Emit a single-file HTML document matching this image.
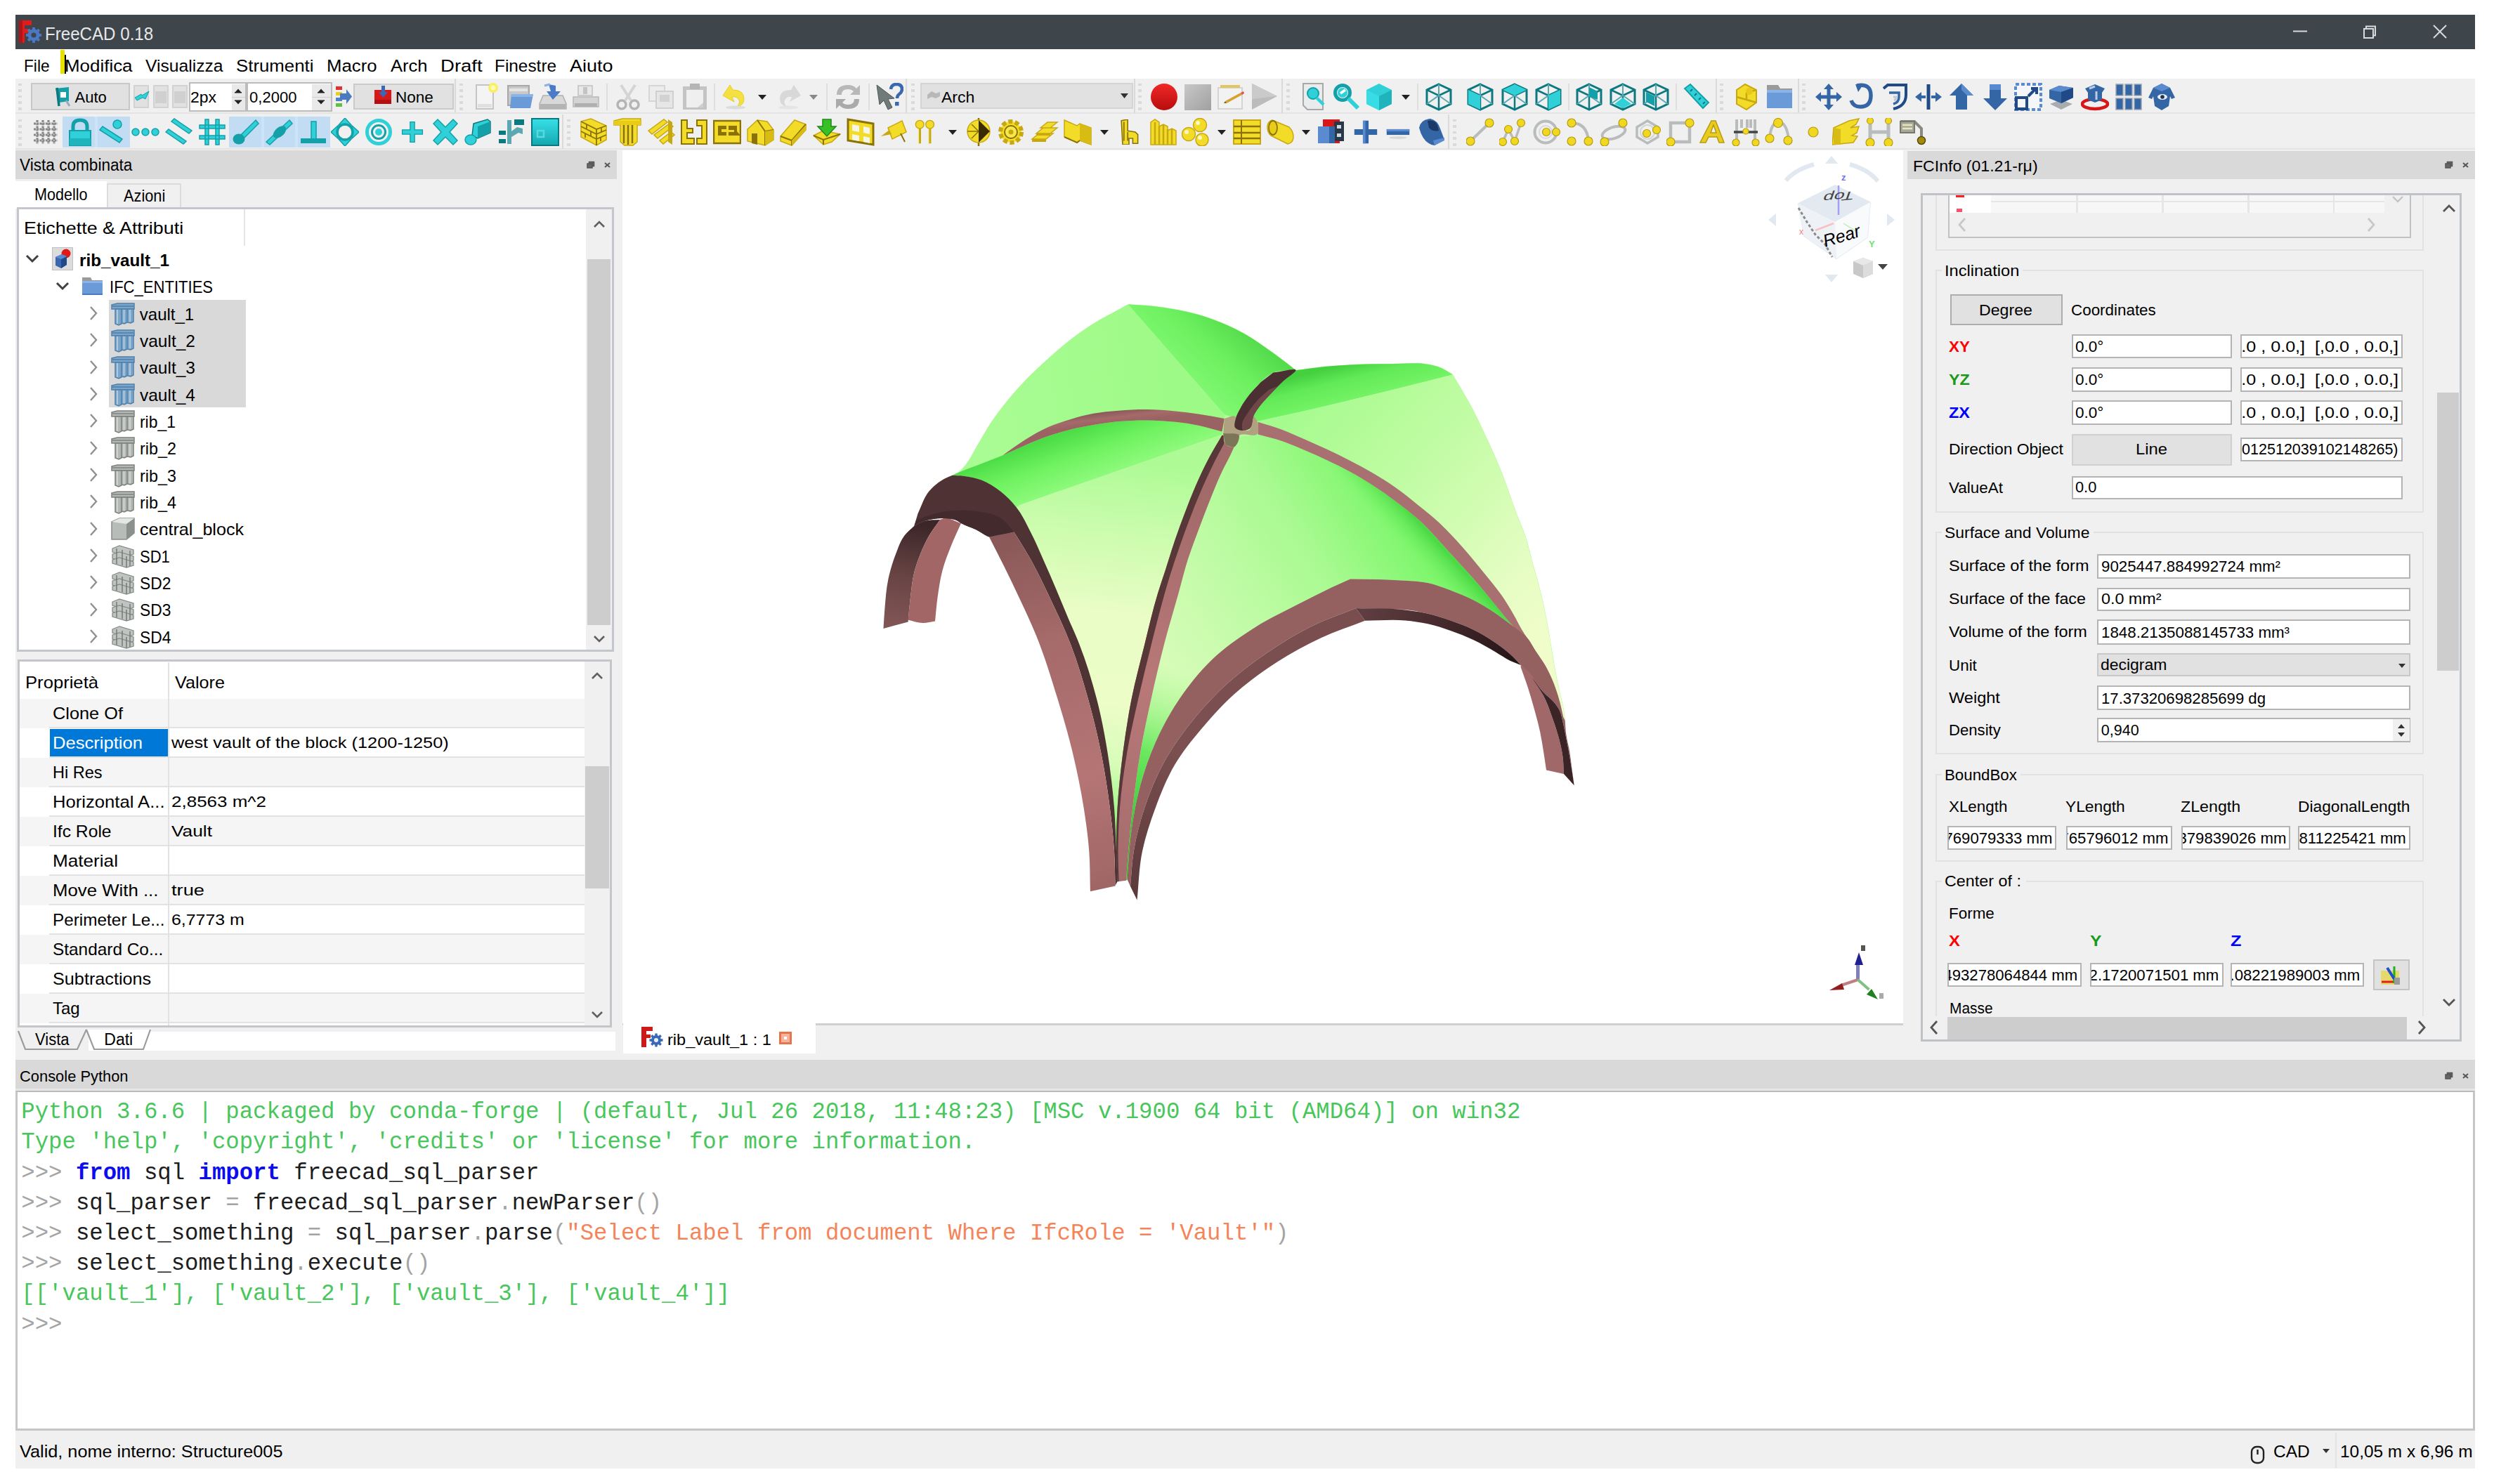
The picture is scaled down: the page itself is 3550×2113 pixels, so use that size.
<!DOCTYPE html>
<html><head><meta charset="utf-8"><title>FreeCAD 0.18</title>
<style>
html,body{margin:0;padding:0;background:#fff;}
body{width:3550px;height:2113px;position:relative;overflow:hidden;font-family:"Liberation Sans",sans-serif;}
.b{position:absolute;display:block;}
.t{position:absolute;white-space:pre;line-height:1;transform-origin:0 0;font-family:"Liberation Sans",sans-serif;}
</style></head><body>
<div class="b" style="left:22px;top:21px;width:3501px;height:49px;background:#3e454b;"></div>
<div class="b" style="left:22px;top:70px;width:3501px;height:42px;background:#ffffff;"></div>
<div class="b" style="left:22px;top:112px;width:3501px;height:101px;background:#f0f0f0;"></div>
<div class="b" style="left:22px;top:160px;width:3501px;height:2px;background:#e4e4e4;"></div>
<div class="b" style="left:22px;top:211px;width:3501px;height:2px;background:#e4e4e4;"></div>
<div class="b" style="left:22px;top:213px;width:3501px;height:1878px;background:#f0f0f0;"></div>
<span class="t" style="left:64.3px;top:35.8px;font-size:25px;color:#e6e8ea;transform:scaleX(0.965);">FreeCAD 0.18</span>
<svg class="b" style="left:24px;top:26px;" width="40" height="40" viewBox="0 0 40 40"><path d="M3 3h18v7h-10v5h7v6h-7v14h-8z" fill="#e01b1b"/><path d="M3 3h5v32h-5z" fill="#b01414"/><circle cx="24" cy="24" r="8.5" fill="#4a78c2"/><circle cx="24" cy="24" r="3.6" fill="#3e454b"/><g stroke="#4a78c2" stroke-width="4"><path d="M24 13v22M13 24h22M16.2 16.2l15.6 15.6M31.8 16.2l-15.6 15.6"/></g><circle cx="24" cy="24" r="3.6" fill="#3e454b"/></svg>
<svg class="b" style="left:3259px;top:40px;overflow:visible;" width="440" height="30" viewBox="0 0 440 30"><path d="M5 4.5h20" stroke="#d8dadc" stroke-width="2"/><path d="M106 1h13v13h-13zM109 1v-3.500h13v13h-3" fill="none" stroke="#d8dadc" stroke-width="2"/><path d="M205 -4l18 18M223 -4l-18 18" stroke="#d8dadc" stroke-width="2"/></svg>
<span class="t" style="left:33.9px;top:81.6px;font-size:24.5px;color:#000;transform:scaleX(0.926);">File</span>
<span class="t" style="left:92.2px;top:81.6px;font-size:24.5px;color:#000;transform:scaleX(1.058);">Modifica</span>
<span class="t" style="left:207.3px;top:81.6px;font-size:24.5px;color:#000;transform:scaleX(1.006);">Visualizza</span>
<span class="t" style="left:336.2px;top:81.6px;font-size:24.5px;color:#000;transform:scaleX(1.054);">Strumenti</span>
<span class="t" style="left:465.2px;top:81.6px;font-size:24.5px;color:#000;transform:scaleX(1.051);">Macro</span>
<span class="t" style="left:556.2px;top:81.6px;font-size:24.5px;color:#000;transform:scaleX(1.043);">Arch</span>
<span class="t" style="left:627.2px;top:81.6px;font-size:24.5px;color:#000;transform:scaleX(1.124);">Draft</span>
<span class="t" style="left:704.3px;top:81.6px;font-size:24.5px;color:#000;transform:scaleX(0.995);">Finestre</span>
<span class="t" style="left:811.2px;top:81.6px;font-size:24.5px;color:#000;transform:scaleX(1.103);">Aiuto</span>
<div class="b" style="left:86px;top:71px;width:6px;height:34px;background:#e8e000;"></div>
<div class="b" style="left:92px;top:78px;width:2px;height:27px;background:#000;"></div>
<div class="b" style="left:22px;top:214px;width:856px;height:41px;background:#d9d9d9;"></div>
<span class="t" style="left:27.9px;top:224.1px;font-size:23.5px;color:#000;transform:scaleX(0.962);">Vista combinata</span>
<svg class="b" style="left:833px;top:227px;" width="40" height="16" viewBox="0 0 40 16"><path d="M3 6h7v6h-7z M5.500 6v-2.500h7v6h-2.500" fill="#666" stroke="#555" stroke-width="1.500"/><path d="M28 5l7 6M35 5l-7 6" stroke="#555" stroke-width="2"/></svg>
<div class="b" style="left:22px;top:258px;width:130px;height:39px;background:#ffffff;"></div>
<div class="b" style="left:152px;top:261px;width:106px;height:35px;background:#f0f0f0;border:2px solid #dcdcdc;border-bottom:none;box-sizing:border-box;"></div>
<span class="t" style="left:49.1px;top:264.7px;font-size:24px;color:#000;transform:scaleX(0.899);">Modello</span>
<span class="t" style="left:176.3px;top:267.2px;font-size:24px;color:#000;transform:scaleX(0.907);">Azioni</span>
<div class="b" style="left:24px;top:295px;width:850px;height:633px;background:#ffffff;border:3px solid #c3c7cb;box-sizing:border-box;"></div>
<div class="b" style="left:346.5px;top:298px;width:2px;height:52px;background:#e5e5e5;"></div>
<span class="t" style="left:34.2px;top:313.3px;font-size:24px;color:#000;transform:scaleX(1.120);">Etichette &amp; Attributi</span>
<div class="b" style="left:154.6px;top:427px;width:195.2px;height:153px;background:#d9d9d9;"></div>
<div class="b" style="left:834px;top:298px;width:37px;height:627px;background:#f0f0f0;"></div>
<div class="b" style="left:836px;top:369px;width:33px;height:521px;background:#cdcdcd;"></div>
<svg class="b" style="left:843px;top:312px;" width="20" height="14" viewBox="0 0 20 14"><path d="M3 11l7-7 7 7" fill="none" stroke="#606060" stroke-width="2.6"/></svg>
<svg class="b" style="left:843px;top:903px;" width="20" height="14" viewBox="0 0 20 14"><path d="M3 3l7 7 7-7" fill="none" stroke="#606060" stroke-width="2.6"/></svg>
<svg class="b" style="left:36px;top:361px;" width="20" height="14" viewBox="0 0 20 14"><path d="M2 3l8 8 8-8" fill="none" stroke="#404040" stroke-width="3"/></svg>
<svg class="b" style="left:79px;top:400px;" width="20" height="14" viewBox="0 0 20 14"><path d="M2 3l8 8 8-8" fill="none" stroke="#404040" stroke-width="3"/></svg>
<span class="t" style="left:112.7px;top:359.0px;font-size:24px;color:#000;font-weight:bold;transform:scaleX(1.010);">rib_vault_1</span>
<span class="t" style="left:155.9px;top:397.3px;font-size:24px;color:#000;transform:scaleX(0.919);">IFC_ENTITIES</span>
<svg class="b" style="left:126px;top:434.98px;" width="14" height="22" viewBox="0 0 14 22"><path d="M3 2l8 9-8 9" fill="none" stroke="#909090" stroke-width="2.4"/></svg>
<span class="t" style="left:198.8px;top:435.7px;font-size:24px;color:#000;">vault_1</span>
<svg class="b" style="left:126px;top:473.32px;" width="14" height="22" viewBox="0 0 14 22"><path d="M3 2l8 9-8 9" fill="none" stroke="#909090" stroke-width="2.4"/></svg>
<span class="t" style="left:198.8px;top:474.0px;font-size:24px;color:#000;transform:scaleX(1.020);">vault_2</span>
<svg class="b" style="left:126px;top:511.66px;" width="14" height="22" viewBox="0 0 14 22"><path d="M3 2l8 9-8 9" fill="none" stroke="#909090" stroke-width="2.4"/></svg>
<span class="t" style="left:198.8px;top:512.3px;font-size:24px;color:#000;transform:scaleX(1.020);">vault_3</span>
<svg class="b" style="left:126px;top:550px;" width="14" height="22" viewBox="0 0 14 22"><path d="M3 2l8 9-8 9" fill="none" stroke="#909090" stroke-width="2.4"/></svg>
<span class="t" style="left:198.8px;top:550.7px;font-size:24px;color:#000;transform:scaleX(1.020);">vault_4</span>
<svg class="b" style="left:126px;top:588.34px;" width="14" height="22" viewBox="0 0 14 22"><path d="M3 2l8 9-8 9" fill="none" stroke="#909090" stroke-width="2.4"/></svg>
<span class="t" style="left:198.8px;top:589.0px;font-size:24px;color:#000;transform:scaleX(0.953);">rib_1</span>
<svg class="b" style="left:126px;top:626.68px;" width="14" height="22" viewBox="0 0 14 22"><path d="M3 2l8 9-8 9" fill="none" stroke="#909090" stroke-width="2.4"/></svg>
<span class="t" style="left:198.8px;top:627.4px;font-size:24px;color:#000;transform:scaleX(0.972);">rib_2</span>
<svg class="b" style="left:126px;top:665.02px;" width="14" height="22" viewBox="0 0 14 22"><path d="M3 2l8 9-8 9" fill="none" stroke="#909090" stroke-width="2.4"/></svg>
<span class="t" style="left:198.8px;top:665.7px;font-size:24px;color:#000;transform:scaleX(0.972);">rib_3</span>
<svg class="b" style="left:126px;top:703.36px;" width="14" height="22" viewBox="0 0 14 22"><path d="M3 2l8 9-8 9" fill="none" stroke="#909090" stroke-width="2.4"/></svg>
<span class="t" style="left:198.8px;top:704.0px;font-size:24px;color:#000;transform:scaleX(0.972);">rib_4</span>
<svg class="b" style="left:126px;top:741.7px;" width="14" height="22" viewBox="0 0 14 22"><path d="M3 2l8 9-8 9" fill="none" stroke="#909090" stroke-width="2.4"/></svg>
<span class="t" style="left:198.7px;top:742.4px;font-size:24px;color:#000;transform:scaleX(1.047);">central_block</span>
<svg class="b" style="left:126px;top:780.04px;" width="14" height="22" viewBox="0 0 14 22"><path d="M3 2l8 9-8 9" fill="none" stroke="#909090" stroke-width="2.4"/></svg>
<span class="t" style="left:198.8px;top:780.7px;font-size:24px;color:#000;transform:scaleX(0.917);">SD1</span>
<svg class="b" style="left:126px;top:818.38px;" width="14" height="22" viewBox="0 0 14 22"><path d="M3 2l8 9-8 9" fill="none" stroke="#909090" stroke-width="2.4"/></svg>
<span class="t" style="left:198.8px;top:819.1px;font-size:24px;color:#000;transform:scaleX(0.950);">SD2</span>
<svg class="b" style="left:126px;top:856.72px;" width="14" height="22" viewBox="0 0 14 22"><path d="M3 2l8 9-8 9" fill="none" stroke="#909090" stroke-width="2.4"/></svg>
<span class="t" style="left:198.8px;top:857.4px;font-size:24px;color:#000;transform:scaleX(0.950);">SD3</span>
<svg class="b" style="left:126px;top:895.06px;" width="14" height="22" viewBox="0 0 14 22"><path d="M3 2l8 9-8 9" fill="none" stroke="#909090" stroke-width="2.4"/></svg>
<span class="t" style="left:198.8px;top:895.7px;font-size:24px;color:#000;transform:scaleX(0.950);">SD4</span>
<div class="b" style="left:25px;top:939px;width:846px;height:524px;background:#ffffff;border:3px solid #c3c7cb;box-sizing:border-box;"></div>
<span class="t" style="left:36.2px;top:959.7px;font-size:24px;color:#000;transform:scaleX(1.068);">Proprietà</span>
<span class="t" style="left:249.2px;top:959.7px;font-size:24px;color:#000;transform:scaleX(1.049);">Valore</span>
<div class="b" style="left:28px;top:994.5px;width:804px;height:42px;background:#f5f5f5;"></div>
<div class="b" style="left:70px;top:1035px;width:762px;height:2px;background:#e2e2e2;"></div>
<span class="t" style="left:74.8px;top:1003.7px;font-size:24px;color:#000;transform:scaleX(1.055);">Clone Of</span>
<div class="b" style="left:70px;top:1077px;width:762px;height:2px;background:#e2e2e2;"></div>
<div class="b" style="left:70.8px;top:1037.5px;width:169.2px;height:39px;background:#0078d7;"></div>
<span class="t" style="left:74.8px;top:1045.7px;font-size:24px;color:#fff;transform:scaleX(1.066);">Description</span>
<span class="t" style="left:243.8px;top:1047.0px;font-size:22.5px;color:#000;transform:scaleX(1.127);">west vault of the block (1200-1250)</span>
<div class="b" style="left:28px;top:1078.5px;width:804px;height:42px;background:#f5f5f5;"></div>
<div class="b" style="left:70px;top:1119px;width:762px;height:2px;background:#e2e2e2;"></div>
<span class="t" style="left:74.9px;top:1087.7px;font-size:24px;color:#000;transform:scaleX(0.981);">Hi Res</span>
<div class="b" style="left:70px;top:1161px;width:762px;height:2px;background:#e2e2e2;"></div>
<span class="t" style="left:74.8px;top:1129.7px;font-size:24px;color:#000;transform:scaleX(1.068);">Horizontal A...</span>
<span class="t" style="left:243.8px;top:1131.0px;font-size:22.5px;color:#000;transform:scaleX(1.155);">2,8563 m^2</span>
<div class="b" style="left:28px;top:1162.5px;width:804px;height:42px;background:#f5f5f5;"></div>
<div class="b" style="left:70px;top:1203px;width:762px;height:2px;background:#e2e2e2;"></div>
<span class="t" style="left:74.9px;top:1171.7px;font-size:24px;color:#000;transform:scaleX(1.027);">Ifc Role</span>
<span class="t" style="left:243.8px;top:1173.0px;font-size:22.5px;color:#000;transform:scaleX(1.169);">Vault</span>
<div class="b" style="left:70px;top:1245px;width:762px;height:2px;background:#e2e2e2;"></div>
<span class="t" style="left:74.8px;top:1213.7px;font-size:24px;color:#000;transform:scaleX(1.089);">Material</span>
<div class="b" style="left:28px;top:1246.5px;width:804px;height:42px;background:#f5f5f5;"></div>
<div class="b" style="left:70px;top:1287px;width:762px;height:2px;background:#e2e2e2;"></div>
<span class="t" style="left:74.8px;top:1255.7px;font-size:24px;color:#000;transform:scaleX(1.074);">Move With ...</span>
<span class="t" style="left:243.8px;top:1257.0px;font-size:22.5px;color:#000;transform:scaleX(1.213);">true</span>
<div class="b" style="left:70px;top:1329px;width:762px;height:2px;background:#e2e2e2;"></div>
<span class="t" style="left:74.9px;top:1297.7px;font-size:24px;color:#000;transform:scaleX(1.014);">Perimeter Le...</span>
<span class="t" style="left:243.9px;top:1299.0px;font-size:22.5px;color:#000;transform:scaleX(1.107);">6,7773 m</span>
<div class="b" style="left:28px;top:1330.5px;width:804px;height:42px;background:#f5f5f5;"></div>
<div class="b" style="left:70px;top:1371px;width:762px;height:2px;background:#e2e2e2;"></div>
<span class="t" style="left:74.9px;top:1339.7px;font-size:24px;color:#000;transform:scaleX(1.016);">Standard Co...</span>
<div class="b" style="left:70px;top:1413px;width:762px;height:2px;background:#e2e2e2;"></div>
<span class="t" style="left:74.8px;top:1381.7px;font-size:24px;color:#000;transform:scaleX(1.051);">Subtractions</span>
<div class="b" style="left:28px;top:1414.5px;width:804px;height:42px;background:#f5f5f5;"></div>
<div class="b" style="left:70px;top:1455px;width:762px;height:2px;background:#e2e2e2;"></div>
<span class="t" style="left:74.9px;top:1423.7px;font-size:24px;color:#000;">Tag</span>
<div class="b" style="left:239px;top:943px;width:2px;height:517px;background:#e2e2e2;"></div>
<div class="b" style="left:832px;top:942px;width:36px;height:518px;background:#f0f0f0;"></div>
<div class="b" style="left:833px;top:1091px;width:34px;height:174px;background:#cdcdcd;"></div>
<svg class="b" style="left:840px;top:955px;" width="20" height="14" viewBox="0 0 20 14"><path d="M3 11l7-7 7 7" fill="none" stroke="#606060" stroke-width="2.6"/></svg>
<svg class="b" style="left:840px;top:1438px;" width="20" height="14" viewBox="0 0 20 14"><path d="M3 3l7 7 7-7" fill="none" stroke="#606060" stroke-width="2.6"/></svg>
<div class="b" style="left:126px;top:1468.6px;width:750px;height:27.8px;background:#ffffff;"></div>
<svg class="b" style="left:22px;top:1464px;" width="200" height="36" viewBox="0 0 200 36"><path d="M101 2l11 28h70l10-28z" fill="#fff"/><path d="M4 4l10 26h74l13-28" fill="none" stroke="#9c9c9c" stroke-width="2.200"/><path d="M101 2l11 28h70l10-28" fill="none" stroke="#9c9c9c" stroke-width="2.200"/></svg>
<span class="t" style="left:49.8px;top:1469.3px;font-size:23px;color:#000;transform:scaleX(0.957);">Vista</span>
<span class="t" style="left:148.3px;top:1469.3px;font-size:23px;color:#000;">Dati</span>
<div class="b" style="left:886px;top:214px;width:1823px;height:1243px;background:#ffffff;"></div>
<div class="b" style="left:886px;top:1457px;width:1823px;height:3px;background:#cfcfcf;"></div>
<div class="b" style="left:887px;top:1457px;width:274px;height:43px;background:#ffffff;"></div>
<span class="t" style="left:950.3px;top:1469.5px;font-size:22.5px;color:#000;transform:scaleX(1.046);">rib_vault_1 : 1</span>
<svg class="b" style="left:911px;top:1461px;" width="36" height="32" viewBox="0 0 36 32"><path d="M2 1h16v6h-9v5h6v5h-6v13h-7z" fill="#d01818"/><circle cx="23" cy="20" r="7" fill="#3a68b4"/><g stroke="#3a68b4" stroke-width="3.4"><path d="M23 10.500v19M13.500 20h19M16.300 13.300l13.400 13.400M29.700 13.300l-13.400 13.400"/></g><circle cx="23" cy="20" r="3" fill="#e8ecf4"/></svg>
<svg class="b" style="left:1109px;top:1469px;" width="20" height="20" viewBox="0 0 20 20"><rect x="1.500" y="1.500" width="15" height="15" fill="#f4b49c" stroke="#e8744c" stroke-width="3"/><rect x="7" y="7" width="4" height="4" fill="#fff"/></svg>
<div class="b" style="left:22px;top:1508.6px;width:3501px;height:41.4px;background:#d9d9d9;"></div>
<div class="b" style="left:22px;top:1550px;width:3501px;height:3px;background:#e6e6e6;"></div>
<span class="t" style="left:27.9px;top:1521.6px;font-size:22px;color:#000;transform:scaleX(0.995);">Console Python</span>
<svg class="b" style="left:3478px;top:1524px;" width="40" height="16" viewBox="0 0 40 16"><path d="M3 6h7v6h-7z M5.500 6v-2.500h7v6h-2.500" fill="#666" stroke="#555" stroke-width="1.500"/><path d="M28 5l7 6M35 5l-7 6" stroke="#555" stroke-width="2"/></svg>
<div class="b" style="left:22px;top:1553px;width:3501px;height:483.5px;background:#ffffff;border:3px solid #c6c6c6;box-sizing:border-box;border-top:2px solid #b8bcc0;"></div>
<span class="t" style="left:30.3px;top:1568.2px;font-size:32.33px;color:#48c65c;font-family:'Liberation Mono',monospace;">Python 3.6.6 | packaged by conda-forge | (default, Jul 26 2018, 11:48:23) [MSC v.1900 64 bit (AMD64)] on win32</span>
<span class="t" style="left:30.3px;top:1611.4px;font-size:32.33px;color:#48c65c;font-family:'Liberation Mono',monospace;">Type &#x27;help&#x27;, &#x27;copyright&#x27;, &#x27;credits&#x27; or &#x27;license&#x27; for more information.</span>
<span class="t" style="left:30.3px;top:1654.6px;font-size:32.33px;color:#a4a4a4;font-family:'Liberation Mono',monospace;">&gt;&gt;&gt; </span>
<span class="t" style="left:107.9px;top:1654.6px;font-size:32.33px;color:#0c0cf0;font-family:'Liberation Mono',monospace;font-weight:bold;">from</span>
<span class="t" style="left:185.5px;top:1654.6px;font-size:32.33px;color:#1c1c1c;font-family:'Liberation Mono',monospace;"> sql </span>
<span class="t" style="left:282.5px;top:1654.6px;font-size:32.33px;color:#0c0cf0;font-family:'Liberation Mono',monospace;font-weight:bold;">import</span>
<span class="t" style="left:398.9px;top:1654.6px;font-size:32.33px;color:#1c1c1c;font-family:'Liberation Mono',monospace;"> freecad_sql_parser</span>
<span class="t" style="left:30.3px;top:1697.8px;font-size:32.33px;color:#a4a4a4;font-family:'Liberation Mono',monospace;">&gt;&gt;&gt; </span>
<span class="t" style="left:107.9px;top:1697.8px;font-size:32.33px;color:#1c1c1c;font-family:'Liberation Mono',monospace;">sql_parser </span>
<span class="t" style="left:321.3px;top:1697.8px;font-size:32.33px;color:#a4a4a4;font-family:'Liberation Mono',monospace;">=</span>
<span class="t" style="left:340.7px;top:1697.8px;font-size:32.33px;color:#1c1c1c;font-family:'Liberation Mono',monospace;"> freecad_sql_parser</span>
<span class="t" style="left:709.3px;top:1697.8px;font-size:32.33px;color:#a4a4a4;font-family:'Liberation Mono',monospace;">.</span>
<span class="t" style="left:728.7px;top:1697.8px;font-size:32.33px;color:#1c1c1c;font-family:'Liberation Mono',monospace;">newParser</span>
<span class="t" style="left:903.3px;top:1697.8px;font-size:32.33px;color:#a4a4a4;font-family:'Liberation Mono',monospace;">()</span>
<span class="t" style="left:30.3px;top:1741.0px;font-size:32.33px;color:#a4a4a4;font-family:'Liberation Mono',monospace;">&gt;&gt;&gt; </span>
<span class="t" style="left:107.9px;top:1741.0px;font-size:32.33px;color:#1c1c1c;font-family:'Liberation Mono',monospace;">select_something </span>
<span class="t" style="left:437.7px;top:1741.0px;font-size:32.33px;color:#a4a4a4;font-family:'Liberation Mono',monospace;">=</span>
<span class="t" style="left:457.1px;top:1741.0px;font-size:32.33px;color:#1c1c1c;font-family:'Liberation Mono',monospace;"> sql_parser</span>
<span class="t" style="left:670.5px;top:1741.0px;font-size:32.33px;color:#a4a4a4;font-family:'Liberation Mono',monospace;">.</span>
<span class="t" style="left:689.9px;top:1741.0px;font-size:32.33px;color:#1c1c1c;font-family:'Liberation Mono',monospace;">parse</span>
<span class="t" style="left:786.9px;top:1741.0px;font-size:32.33px;color:#a4a4a4;font-family:'Liberation Mono',monospace;">(</span>
<span class="t" style="left:806.3px;top:1741.0px;font-size:32.33px;color:#f4845a;font-family:'Liberation Mono',monospace;">&quot;Select Label from document Where IfcRole = &#x27;Vault&#x27;&quot;</span>
<span class="t" style="left:1815.1px;top:1741.0px;font-size:32.33px;color:#a4a4a4;font-family:'Liberation Mono',monospace;">)</span>
<span class="t" style="left:30.3px;top:1784.2px;font-size:32.33px;color:#a4a4a4;font-family:'Liberation Mono',monospace;">&gt;&gt;&gt; </span>
<span class="t" style="left:107.9px;top:1784.2px;font-size:32.33px;color:#1c1c1c;font-family:'Liberation Mono',monospace;">select_something</span>
<span class="t" style="left:418.3px;top:1784.2px;font-size:32.33px;color:#a4a4a4;font-family:'Liberation Mono',monospace;">.</span>
<span class="t" style="left:437.7px;top:1784.2px;font-size:32.33px;color:#1c1c1c;font-family:'Liberation Mono',monospace;">execute</span>
<span class="t" style="left:573.5px;top:1784.2px;font-size:32.33px;color:#a4a4a4;font-family:'Liberation Mono',monospace;">()</span>
<span class="t" style="left:30.3px;top:1827.4px;font-size:32.33px;color:#48c65c;font-family:'Liberation Mono',monospace;">[[&#x27;vault_1&#x27;], [&#x27;vault_2&#x27;], [&#x27;vault_3&#x27;], [&#x27;vault_4&#x27;]]</span>
<span class="t" style="left:30.3px;top:1870.6px;font-size:32.33px;color:#a4a4a4;font-family:'Liberation Mono',monospace;">&gt;&gt;&gt; </span>
<span class="t" style="left:28.2px;top:2056.1px;font-size:23.5px;color:#000;transform:scaleX(1.075);">Valid, nome interno: Structure005</span>
<svg class="b" style="left:3202px;top:2058px;" width="24" height="28" viewBox="0 0 24 28"><rect x="3" y="2" width="17" height="23" rx="7" fill="none" stroke="#222" stroke-width="2.4"/><path d="M11.500 6v7" stroke="#222" stroke-width="2.4"/></svg>
<span class="t" style="left:3236.0px;top:2056.1px;font-size:23.5px;color:#000;transform:scaleX(1.043);">CAD</span>
<svg class="b" style="left:3304px;top:2061px;" width="14" height="10" viewBox="0 0 14 10"><path d="M2 2h10l-5 6z" fill="#333"/></svg>
<div class="b" style="left:3324px;top:2040px;width:2px;height:50px;background:#e2e2e2;"></div>
<span class="t" style="left:3331.3px;top:2056.1px;font-size:23.5px;color:#000;transform:scaleX(1.038);">10,05 m x 6,96 m</span>
<svg class="b" style="left:74px;top:352px;" width="31" height="33" viewBox="0 0 31 33"><rect x="0.500" y="0.500" width="29" height="32" fill="#dcdcdc" stroke="#c0c0c0"/><circle cx="20" cy="9" r="6.500" fill="#e01818"/><path d="M5 14l9-4 7 3v12l-8 5-8-4z" fill="#3a68b0"/><path d="M13 17l8-4v12l-8 5z" fill="#204a87"/><path d="M5 14l8 3 8-4-7-3z" fill="#5a8ad0"/></svg>
<svg class="b" style="left:115.5px;top:393.5px;" width="31" height="27" viewBox="0 0 31 27"><path d="M1 1h12l2 4h15v4h-29z" fill="#9a9a9a"/><path d="M1 6h29v20h-29z" fill="#6a9ad8"/><path d="M1 6h29v3h-29z" fill="#8ab4e8"/><path d="M1 24h29v2h-29z" fill="#4a7ac0"/></svg>
<svg class="b" style="left:158px;top:430.5px;" width="34" height="33" viewBox="0 0 34 33"><path d="M1 3l8-2h24v8h-32z" fill="#7aa6cc" stroke="#5080a8" stroke-width="1.500"/><path d="M1 5h32" stroke="#5a86b0" stroke-width="2"/><path d="M6 9h9v21l-4 2-5-2zM15 9h8v19l-4 2-4-1zM23 9h9v18l-4 2-5-1z" fill="#7aa6cc" stroke="#5080a8" stroke-width="1.500"/><path d="M9 10v20M18.500 10v18M27 10v17" stroke="#f0f0f0" stroke-width="1.600" opacity="0.600"/></svg>
<svg class="b" style="left:158px;top:468.84px;" width="34" height="33" viewBox="0 0 34 33"><path d="M1 3l8-2h24v8h-32z" fill="#7aa6cc" stroke="#5080a8" stroke-width="1.500"/><path d="M1 5h32" stroke="#5a86b0" stroke-width="2"/><path d="M6 9h9v21l-4 2-5-2zM15 9h8v19l-4 2-4-1zM23 9h9v18l-4 2-5-1z" fill="#7aa6cc" stroke="#5080a8" stroke-width="1.500"/><path d="M9 10v20M18.500 10v18M27 10v17" stroke="#f0f0f0" stroke-width="1.600" opacity="0.600"/></svg>
<svg class="b" style="left:158px;top:507.18px;" width="34" height="33" viewBox="0 0 34 33"><path d="M1 3l8-2h24v8h-32z" fill="#7aa6cc" stroke="#5080a8" stroke-width="1.500"/><path d="M1 5h32" stroke="#5a86b0" stroke-width="2"/><path d="M6 9h9v21l-4 2-5-2zM15 9h8v19l-4 2-4-1zM23 9h9v18l-4 2-5-1z" fill="#7aa6cc" stroke="#5080a8" stroke-width="1.500"/><path d="M9 10v20M18.500 10v18M27 10v17" stroke="#f0f0f0" stroke-width="1.600" opacity="0.600"/></svg>
<svg class="b" style="left:158px;top:545.52px;" width="34" height="33" viewBox="0 0 34 33"><path d="M1 3l8-2h24v8h-32z" fill="#7aa6cc" stroke="#5080a8" stroke-width="1.500"/><path d="M1 5h32" stroke="#5a86b0" stroke-width="2"/><path d="M6 9h9v21l-4 2-5-2zM15 9h8v19l-4 2-4-1zM23 9h9v18l-4 2-5-1z" fill="#7aa6cc" stroke="#5080a8" stroke-width="1.500"/><path d="M9 10v20M18.500 10v18M27 10v17" stroke="#f0f0f0" stroke-width="1.600" opacity="0.600"/></svg>
<svg class="b" style="left:158px;top:583.86px;" width="34" height="33" viewBox="0 0 34 33"><path d="M1 3l8-2h24v8h-32z" fill="#b4b8b4" stroke="#7c807c" stroke-width="1.500"/><path d="M1 5h32" stroke="#8c908c" stroke-width="2"/><path d="M6 9h9v21l-4 2-5-2zM15 9h8v19l-4 2-4-1zM23 9h9v18l-4 2-5-1z" fill="#b4b8b4" stroke="#7c807c" stroke-width="1.500"/><path d="M9 10v20M18.500 10v18M27 10v17" stroke="#f0f0f0" stroke-width="1.600" opacity="0.600"/></svg>
<svg class="b" style="left:158px;top:622.2px;" width="34" height="33" viewBox="0 0 34 33"><path d="M1 3l8-2h24v8h-32z" fill="#b4b8b4" stroke="#7c807c" stroke-width="1.500"/><path d="M1 5h32" stroke="#8c908c" stroke-width="2"/><path d="M6 9h9v21l-4 2-5-2zM15 9h8v19l-4 2-4-1zM23 9h9v18l-4 2-5-1z" fill="#b4b8b4" stroke="#7c807c" stroke-width="1.500"/><path d="M9 10v20M18.500 10v18M27 10v17" stroke="#f0f0f0" stroke-width="1.600" opacity="0.600"/></svg>
<svg class="b" style="left:158px;top:660.54px;" width="34" height="33" viewBox="0 0 34 33"><path d="M1 3l8-2h24v8h-32z" fill="#b4b8b4" stroke="#7c807c" stroke-width="1.500"/><path d="M1 5h32" stroke="#8c908c" stroke-width="2"/><path d="M6 9h9v21l-4 2-5-2zM15 9h8v19l-4 2-4-1zM23 9h9v18l-4 2-5-1z" fill="#b4b8b4" stroke="#7c807c" stroke-width="1.500"/><path d="M9 10v20M18.500 10v18M27 10v17" stroke="#f0f0f0" stroke-width="1.600" opacity="0.600"/></svg>
<svg class="b" style="left:158px;top:698.88px;" width="34" height="33" viewBox="0 0 34 33"><path d="M1 3l8-2h24v8h-32z" fill="#b4b8b4" stroke="#7c807c" stroke-width="1.500"/><path d="M1 5h32" stroke="#8c908c" stroke-width="2"/><path d="M6 9h9v21l-4 2-5-2zM15 9h8v19l-4 2-4-1zM23 9h9v18l-4 2-5-1z" fill="#b4b8b4" stroke="#7c807c" stroke-width="1.500"/><path d="M9 10v20M18.500 10v18M27 10v17" stroke="#f0f0f0" stroke-width="1.600" opacity="0.600"/></svg>
<svg class="b" style="left:158px;top:737.22px;" width="34" height="33" viewBox="0 0 34 33"><path d="M1 6l11-5h21v21l-11 9h-21z" fill="#b8bcb8" stroke="#888c88" stroke-width="1.500"/><path d="M22 9v22l11-9v-21z" fill="#8c908c"/><path d="M1 6l11-5h21l-11 8z" fill="#e4e6e4"/></svg>
<svg class="b" style="left:158px;top:775.56px;" width="34" height="33" viewBox="0 0 34 33"><g fill="#c0c4c0" stroke="#868a86" stroke-width="1.300"><path d="M2 5l10-4 20 6v6l-10 3-20-6z"/><path d="M2 13l10-3 20 6v6l-10 3-20-6z"/><path d="M2 21l10-3 20 6v5l-10 3-20-6z"/></g><path d="M8 5v22M16 7v22M22 16v16M27 8v22" stroke="#767a76" stroke-width="1.500"/></svg>
<svg class="b" style="left:158px;top:813.9px;" width="34" height="33" viewBox="0 0 34 33"><g fill="#c0c4c0" stroke="#868a86" stroke-width="1.300"><path d="M2 5l10-4 20 6v6l-10 3-20-6z"/><path d="M2 13l10-3 20 6v6l-10 3-20-6z"/><path d="M2 21l10-3 20 6v5l-10 3-20-6z"/></g><path d="M8 5v22M16 7v22M22 16v16M27 8v22" stroke="#767a76" stroke-width="1.500"/></svg>
<svg class="b" style="left:158px;top:852.24px;" width="34" height="33" viewBox="0 0 34 33"><g fill="#c0c4c0" stroke="#868a86" stroke-width="1.300"><path d="M2 5l10-4 20 6v6l-10 3-20-6z"/><path d="M2 13l10-3 20 6v6l-10 3-20-6z"/><path d="M2 21l10-3 20 6v5l-10 3-20-6z"/></g><path d="M8 5v22M16 7v22M22 16v16M27 8v22" stroke="#767a76" stroke-width="1.500"/></svg>
<svg class="b" style="left:158px;top:890.58px;" width="34" height="33" viewBox="0 0 34 33"><g fill="#c0c4c0" stroke="#868a86" stroke-width="1.300"><path d="M2 5l10-4 20 6v6l-10 3-20-6z"/><path d="M2 13l10-3 20 6v6l-10 3-20-6z"/><path d="M2 21l10-3 20 6v5l-10 3-20-6z"/></g><path d="M8 5v22M16 7v22M22 16v16M27 8v22" stroke="#767a76" stroke-width="1.500"/></svg>
<svg class="b" style="left:2500px;top:214px;" width="209" height="1243" viewBox="2500 214 209 1243"><g fill="none" stroke="#e2e8f0" stroke-width="6" stroke-linecap="butt"><path d="M2542 257q14-16 40-23"/><path d="M2633 234q26 7 40 24"/></g><g fill="#e2e8f0"><path d="M2607 222l9 11h-18z"/><path d="M2517 313l11-9v18z"/><path d="M2697 313l-11-9v18z"/><path d="M2607 402l9-11h-18z"/></g><path d="M2560 290l52-26 50 24-4 50-44 30-46-32z" fill="#f4f7fa" stroke="#e6ebf2" stroke-width="2"/><path d="M2560 290l52-26 50 24-50 28z" fill="#e3e9f1"/><path d="M2612 316l50-28-4 50-44 30z" fill="#f9fafc"/><path d="M2560 290l52 26 2 52-46-32z" fill="#eef2f7"/><path d="M2560 296l12 20 12 18 14 14 10 18" fill="none" stroke="#8a8a8a" stroke-width="3" stroke-dasharray="4 3"/><path d="M2617 264v42" stroke="#a0a0f4" stroke-width="2.500"/><path d="M2610 318l-26 10" stroke="#fac0c0" stroke-width="2.500"/><path d="M2624 318l22 14" stroke="#c8f0c8" stroke-width="2"/><text x="2598" y="352" font-family="Liberation Sans, sans-serif" font-style="italic" font-size="25" fill="#000" transform="rotate(-17 2598 352)">Rear</text><text x="0" y="0" font-family="Liberation Sans, sans-serif" font-size="21" fill="#444" transform="translate(2641,272) rotate(174.500) skewX(-25) scale(1.300,0.800)">Top</text><text x="2621" y="257" font-family="Liberation Sans, sans-serif" font-size="13" font-weight="bold" fill="#7070f0">z</text><text x="2660" y="352" font-family="Liberation Sans, sans-serif" font-size="13" font-weight="bold" fill="#70e070">Y</text><text x="2561" y="334" font-family="Liberation Sans, sans-serif" font-size="12" fill="#f08080">x</text><path d="M2638 372l14-5 14 5v18l-14 6-14-6z" fill="#c8c8c8"/><path d="M2652 378l14-6v18l-14 6z" fill="#dcdcdc"/><path d="M2638 372l14-5 14 5-14 6z" fill="#e8e8e8"/><path d="M2673 376h14l-7 8z" fill="#444"/><path d="M2644.500 1395v-26" stroke="#8080c0" stroke-width="5"/><path d="M2646 1356l6 18h-12z" fill="#202090"/><rect x="2649" y="1346" width="6" height="8" fill="#555"/><path d="M2644.500 1395l-24 8" stroke="#c08080" stroke-width="4"/><path d="M2604 1410l18-10 3 9z" fill="#902020"/><path d="M2644.500 1395l16 14" stroke="#80c080" stroke-width="4"/><path d="M2673 1423l-16-7 7-8z" fill="#208020"/><rect x="2675" y="1414" width="6" height="8" fill="#aaa"/></svg>
<div class="b" style="left:26px;top:119px;width:5px;height:38px;background:repeating-linear-gradient(180deg,#dadada 0 3.500px,transparent 3.500px 8.500px);"></div>
<div class="b" style="left:43.7px;top:118px;width:141.7px;height:38.5px;background:#e1e1e1;border:2px solid #c8c8c8;box-sizing:border-box;"></div>
<svg class="b" style="left:76px;top:123px;" width="26" height="30" viewBox="0 0 26 30"><path d="M3 3l19-2v20l-14 2z" fill="#13a0a8"/><path d="M5 2l3 26" stroke="#0c7880" stroke-width="3.500"/><rect x="10" y="8" width="8" height="8" fill="#fff"/><path d="M18 20l5 8" stroke="#9ab" stroke-width="3"/></svg>
<span class="t" style="left:106.5px;top:128.4px;font-size:22px;color:#000;">Auto</span>
<div class="b" style="left:190.4px;top:121px;width:22.1px;height:33px;background:#e1e1e1;border:2px solid #d2d2d2;box-sizing:border-box;"></div>
<div class="b" style="left:217.5px;top:121px;width:22px;height:33px;background:#e1e1e1;border:2px solid #d2d2d2;box-sizing:border-box;"></div>
<div class="b" style="left:244.5px;top:121px;width:22.1px;height:33px;background:#e1e1e1;border:2px solid #d2d2d2;box-sizing:border-box;"></div>
<svg class="b" style="left:191px;top:128px;" width="22" height="16" viewBox="0 0 22 16"><path d="M1 11l9-5 1 2 10-6-5 11-4-2-8 4z" fill="#2fd0d8" stroke="#13a0a8" stroke-width="1"/></svg>
<div class="b" style="left:220.5px;top:130px;width:16px;height:17px;background:#d0d0d0;"></div>
<div class="b" style="left:247.5px;top:130px;width:16px;height:17px;background:#d0d0d0;"></div>
<div class="b" style="left:269px;top:117px;width:82.3px;height:42px;background:#fff;border:2.5px solid #bcbcbc;box-sizing:border-box;"></div>
<div class="b" style="left:329.7px;top:119.5px;width:19.1px;height:37px;background:#e9e9e9;"></div>
<div class="b" style="left:329.7px;top:137.5px;width:19.1px;height:1.5px;background:#d0d0d0;"></div>
<svg class="b" style="left:332.25px;top:124px;" width="14" height="10" viewBox="0 0 14 10"><path d="M3 7h8l-4-4.500z" fill="#222"/><rect x="2" y="7" width="10" height="1.500" fill="#222"/></svg>
<svg class="b" style="left:332.25px;top:141px;" width="14" height="10" viewBox="0 0 14 10"><path d="M3 3h8l-4 4.500z" fill="#222"/><rect x="2" y="1.500" width="10" height="1.500" fill="#222"/></svg>
<span class="t" style="left:271.3px;top:128.4px;font-size:22px;color:#000;transform:scaleX(1.045);">2px</span>
<div class="b" style="left:351.3px;top:117px;width:121.7px;height:42px;background:#fff;border:2.5px solid #bcbcbc;box-sizing:border-box;"></div>
<div class="b" style="left:444px;top:119.5px;width:26.5px;height:37px;background:#e9e9e9;"></div>
<div class="b" style="left:444px;top:137.5px;width:26.5px;height:1.5px;background:#d0d0d0;"></div>
<svg class="b" style="left:450.25px;top:124px;" width="14" height="10" viewBox="0 0 14 10"><path d="M3 7h8l-4-4.500z" fill="#222"/><rect x="2" y="7" width="10" height="1.500" fill="#222"/></svg>
<svg class="b" style="left:450.25px;top:141px;" width="14" height="10" viewBox="0 0 14 10"><path d="M3 3h8l-4 4.500z" fill="#222"/><rect x="2" y="1.500" width="10" height="1.500" fill="#222"/></svg>
<span class="t" style="left:355.1px;top:128.4px;font-size:22px;color:#000;">0,2000</span>
<svg class="b" style="left:476px;top:120px;" width="26" height="36" viewBox="0 0 26 36"><rect x="2" y="3" width="9" height="5" fill="#e03030"/><rect x="2" y="11" width="9" height="5" fill="#e8d020"/><rect x="2" y="19" width="9" height="5" fill="#5080c8"/><rect x="2" y="27" width="9" height="5" fill="#60c040"/><path d="M8 13h9v-6l8 10.500-8 10.500v-6h-9z" fill="#4a7ac0"/></svg>
<div class="b" style="left:503px;top:119px;width:143.4px;height:37px;background:#e1e1e1;border:2px solid #cacaca;box-sizing:border-box;"></div>
<svg class="b" style="left:532px;top:122px;" width="28" height="28" viewBox="0 0 28 28"><rect x="1" y="6" width="24" height="20" fill="#d81818"/><rect x="1" y="20" width="24" height="6" fill="#b01010"/><path d="M11 0h5v9h4l-6.500 8-6.500-8h4z" fill="#3a68b8"/></svg>
<span class="t" style="left:563.1px;top:128.4px;font-size:22px;color:#000;transform:scaleX(1.024);">None</span>
<div class="b" style="left:647.4px;top:112px;width:2px;height:49px;background:#dadada;"></div>
<div class="b" style="left:653.5px;top:119px;width:5px;height:38px;background:repeating-linear-gradient(180deg,#dadada 0 3.500px,transparent 3.500px 8.500px);"></div>
<svg class="b" style="left:672px;top:118px;" width="40" height="40" viewBox="0 0 40 40"><path d="M6 3h24v34h-24z" fill="#f4f4f4" stroke="#c4c4c4" stroke-width="2"/><path d="M8 30h20v5h-20z" fill="#e0e0e0"/><circle cx="30" cy="7" r="7" fill="#f8f060"/><circle cx="30" cy="7" r="3.500" fill="#fffbb0"/></svg>
<svg class="b" style="left:719.5px;top:118px;" width="40" height="40" viewBox="0 0 40 40"><path d="M3 4h30v28h-30z" fill="#c8c8c8" stroke="#a8a8a8" stroke-width="2"/><path d="M5 8h26v4h-26z" fill="#e4e4e4"/><path d="M8 16h31l-4 20h-29z" fill="#6a9ad8"/><path d="M8 16h31l-1 4h-31z" fill="#8ab4e8"/></svg>
<svg class="b" style="left:766.5px;top:118px;" width="40" height="40" viewBox="0 0 40 40"><path d="M6 18h28l5 12v7h-38v-7z" fill="#d8d8d8" stroke="#b0b0b0" stroke-width="1.500"/><path d="M2 30h36v7h-36z" fill="#b4b4b4"/><path d="M14 2l10 2v8h7l-11 12-9-12h6z" fill="#4a7ac8"/><path d="M8 4l8-2" stroke="#8ab0e0" stroke-width="3"/></svg>
<svg class="b" style="left:813.5px;top:118px;" width="40" height="40" viewBox="0 0 40 40"><path d="M9 4h20v14h-20z" fill="#e8e8e8" stroke="#c0c0c0" stroke-width="1.500"/><path d="M16 6h6v10h-6z" fill="#c4c4c4"/><path d="M2 20h36v14h-36z" fill="#d4d4d4" stroke="#b8b8b8" stroke-width="1.500"/><path d="M4 29h32v5h-32z" fill="#b0b0b0"/></svg>
<div class="b" style="left:863px;top:119px;width:2px;height:38px;background:#dedede;"></div>
<svg class="b" style="left:874px;top:118px;" width="40" height="40" viewBox="0 0 40 40"><path d="M10 3l14 22M30 3l-14 22" stroke="#d4d4d4" stroke-width="4"/><circle cx="11" cy="31" r="6" fill="none" stroke="#b4b4b4" stroke-width="3.500"/><circle cx="29" cy="31" r="6" fill="none" stroke="#b4b4b4" stroke-width="3.500"/></svg>
<svg class="b" style="left:921px;top:118px;" width="40" height="40" viewBox="0 0 40 40"><path d="M3 4h22v22h-22z" fill="#ececec" stroke="#d6d6d6" stroke-width="2"/><path d="M13 12h24v24h-24z" fill="#e6e6e6" stroke="#d0d0d0" stroke-width="2"/><path d="M18 17h14v10h-14z" fill="#d2d2d2"/></svg>
<svg class="b" style="left:968.5px;top:118px;" width="40" height="40" viewBox="0 0 40 40"><path d="M3 5h34v33h-34z" fill="#c4c4c4"/><path d="M8 10h24v25h-24z" fill="#efefef"/><path d="M13 1h14v8h-14z" fill="#b4b4b4"/><path d="M24 35l8-7v7z" fill="#d0d0d0"/></svg>
<div class="b" style="left:1016px;top:119px;width:2px;height:38px;background:#dedede;"></div>
<svg class="b" style="left:1027px;top:118px;" width="40" height="40" viewBox="0 0 40 40"><path d="M12 3l4 7q16 0 16 13q0 9-10 11q6-6 2-11q-3-4-9-3l3 7l-16-9z" fill="#f4e040" stroke="#e8d020" stroke-width="1"/><ellipse cx="20" cy="35" rx="14" ry="2.500" fill="#dcdcdc"/></svg>
<svg class="b" style="left:1077.5px;top:134px;" width="14" height="9" viewBox="0 0 14 9"><path d="M1 1h12l-6 7z" fill="#222"/></svg>
<svg class="b" style="left:1102px;top:118px;" width="40" height="40" viewBox="0 0 40 40"><path d="M28 3l-4 7q-16 0-16 13q0 9 10 11q-6-6-2-11q3-4 9-3l-3 7l16-9z" fill="#d8d8d8"/><ellipse cx="20" cy="35" rx="14" ry="2.500" fill="#e4e4e4"/></svg>
<svg class="b" style="left:1151px;top:134px;" width="14" height="9" viewBox="0 0 14 9"><path d="M1 1h12l-6 7z" fill="#888"/></svg>
<div class="b" style="left:1175.5px;top:119px;width:2px;height:38px;background:#dedede;"></div>
<svg class="b" style="left:1186.5px;top:118px;" width="40" height="40" viewBox="0 0 40 40"><path d="M4 17q0-14 16-14q8 0 12 5l5-5v14h-14l5-5q-3-3-8-3q-9 0-9 8z" fill="#b8b8b8"/><path d="M36 23q0 14-16 14q-8 0-12-5l-5 5v-14h14l-5 5q3 3 8 3q9 0 9-8z" fill="#aaaaaa"/></svg>
<div class="b" style="left:1235.7px;top:119px;width:2px;height:38px;background:#dedede;"></div>
<svg class="b" style="left:1246px;top:118px;" width="40" height="40" viewBox="0 0 40 40"><path d="M2 3l4 28 6-6 6 13 6-3-6-12 9-1z" fill="#707a78" stroke="#505856" stroke-width="1"/><path d="M22 9q1-7 8-7q8 0 8 7q0 4-4 7q-3 2-3 6" fill="none" stroke="#3a68b0" stroke-width="4.500"/><rect x="28" y="27" width="5.500" height="5.500" fill="#3a68b0"/></svg>
<div class="b" style="left:1288.8px;top:112px;width:2px;height:49px;background:#dadada;"></div>
<div class="b" style="left:1296.5px;top:119px;width:5px;height:38px;background:repeating-linear-gradient(180deg,#dadada 0 3.500px,transparent 3.500px 8.500px);"></div>
<div class="b" style="left:1309.8px;top:118px;width:303px;height:37px;background:#e1e1e1;border:2px solid #d4d4d4;box-sizing:border-box;"></div>
<svg class="b" style="left:1319px;top:128px;" width="20" height="14" viewBox="0 0 20 14"><path d="M1 7l6-5 6 3 6-2v6l-6 3-6-2-6 3z" fill="#b8b8b8"/></svg>
<span class="t" style="left:1340.3px;top:128.4px;font-size:22px;color:#000;transform:scaleX(1.047);">Arch</span>
<svg class="b" style="left:1594px;top:132px;" width="13" height="9" viewBox="0 0 13 9"><path d="M1 1h11l-5.500 7z" fill="#333"/></svg>
<div class="b" style="left:1614.4px;top:112px;width:2px;height:49px;background:#dadada;"></div>
<div class="b" style="left:1620px;top:119px;width:5px;height:38px;background:repeating-linear-gradient(180deg,#dadada 0 3.500px,transparent 3.500px 8.500px);"></div>
<svg class="b" style="left:1636.5px;top:118px;" width="40" height="40" viewBox="0 0 40 40"><defs><linearGradient id="rg" x1="0" y1="0" x2="0" y2="1"><stop offset="0" stop-color="#f02828"/><stop offset="1" stop-color="#b80c0c"/></linearGradient></defs><circle cx="20" cy="20" r="19" fill="url(#rg)"/></svg>
<svg class="b" style="left:1684.5px;top:118px;" width="40" height="40" viewBox="0 0 40 40"><defs><linearGradient id="sg" x1="0" y1="0" x2="1" y2="1"><stop offset="0" stop-color="#c8c8c8"/><stop offset="1" stop-color="#a0a0a0"/></linearGradient></defs><rect x="1" y="2" width="38" height="37" fill="url(#sg)"/></svg>
<svg class="b" style="left:1732px;top:118px;" width="40" height="40" viewBox="0 0 40 40"><path d="M2 7h34v30h-34z" fill="#f2f2f2" stroke="#d4d4d4" stroke-width="2"/><path d="M5 3h28v4h-28z" fill="#e0c860"/><path d="M12 26l22-12 2 3-22 12z" fill="#d8a030"/><path d="M34 14l4-2 1 3-3 2z" fill="#e85050"/><path d="M12 26l2 3-4 0z" fill="#806020"/></svg>
<svg class="b" style="left:1779.5px;top:118px;" width="40" height="40" viewBox="0 0 40 40"><path d="M2 1l36 18-36 19z" fill="#bcbcbc"/><path d="M2 1l36 18-36 4z" fill="#cacaca"/></svg>
<div class="b" style="left:1824px;top:112px;width:2px;height:49px;background:#dadada;"></div>
<div class="b" style="left:1831px;top:119px;width:5px;height:38px;background:repeating-linear-gradient(180deg,#dadada 0 3.500px,transparent 3.500px 8.500px);"></div>
<svg class="b" style="left:1848.5px;top:118px;" width="40" height="40" viewBox="0 0 40 40"><path d="M6 1h28v37h-22l-6-6z" fill="#e8ecec" stroke="#a8a8a8" stroke-width="2"/><circle cx="20" cy="15" r="8" fill="#2fd0d8" stroke="#13a0a8" stroke-width="2"/><path d="M25 21l10 10" stroke="#2fd0d8" stroke-width="4.500"/></svg>
<svg class="b" style="left:1896px;top:118px;" width="40" height="40" viewBox="0 0 40 40"><circle cx="15" cy="14" r="10.500" fill="none" stroke="#13a0a8" stroke-width="5"/><circle cx="15" cy="14" r="7" fill="#2fd0d8"/><path d="M12 15l7-5" stroke="#fff" stroke-width="3.500"/><path d="M23 22l14 14" stroke="#2fd0d8" stroke-width="6"/></svg>
<svg class="b" style="left:1943px;top:118px;" width="40" height="40" viewBox="0 0 40 40"><path d="M20 1l18 9v20l-18 9-18-9v-20z" fill="#2fd0d8"/><path d="M20 19l18-9v20l-18 9z" fill="#1fb4bc"/><path d="M20 19l-18-9v20l18 9z" fill="#38dce4"/></svg>
<svg class="b" style="left:1993.5px;top:134px;" width="14" height="9" viewBox="0 0 14 9"><path d="M1 1h12l-6 7z" fill="#222"/></svg>
<div class="b" style="left:2017px;top:119px;width:2px;height:38px;background:#dedede;"></div>
<svg class="b" style="left:2028px;top:118px;" width="40" height="40" viewBox="0 0 40 40"><path d="M20 2l17 8v20l-17 8-17-8v-20z" fill="none" stroke="#0c7880" stroke-width="3"/><path d="M3 10l17 8 17-8M20 18v20" stroke="#0c7880" stroke-width="2.500" fill="none"/><path d="M20 2v16M3 30l17-12 17 12" stroke="#5aa8b0" stroke-width="2" fill="none"/></svg>
<svg class="b" style="left:2087px;top:118px;" width="40" height="40" viewBox="0 0 40 40"><path d="M20 2l17 8v20l-17 8-17-8v-20z" fill="none" stroke="#0c7880" stroke-width="3"/><path d="M3 10l17 8 17-8M20 18v20" stroke="#0c7880" stroke-width="2.500" fill="none"/><path d="M20 2v16M3 30l17-12 17 12" stroke="#5aa8b0" stroke-width="2" fill="none"/><path d="M3 10l17 8v20l-17-8z" fill="#2fd0d8"/></svg>
<svg class="b" style="left:2135.5px;top:118px;" width="40" height="40" viewBox="0 0 40 40"><path d="M20 2l17 8v20l-17 8-17-8v-20z" fill="none" stroke="#0c7880" stroke-width="3"/><path d="M3 10l17 8 17-8M20 18v20" stroke="#0c7880" stroke-width="2.500" fill="none"/><path d="M20 2v16M3 30l17-12 17 12" stroke="#5aa8b0" stroke-width="2" fill="none"/><path d="M20 2l17 8-17 8-17-8z" fill="#2fd0d8"/></svg>
<svg class="b" style="left:2183.5px;top:118px;" width="40" height="40" viewBox="0 0 40 40"><path d="M20 2l17 8v20l-17 8-17-8v-20z" fill="none" stroke="#0c7880" stroke-width="3"/><path d="M3 10l17 8 17-8M20 18v20" stroke="#0c7880" stroke-width="2.500" fill="none"/><path d="M20 2v16M3 30l17-12 17 12" stroke="#5aa8b0" stroke-width="2" fill="none"/><path d="M37 10v20l-17 8v-20z" fill="#2fd0d8"/></svg>
<div class="b" style="left:2231.7px;top:119px;width:2px;height:38px;background:#dedede;"></div>
<svg class="b" style="left:2242px;top:118px;" width="40" height="40" viewBox="0 0 40 40"><path d="M20 2l17 8v20l-17 8-17-8v-20z" fill="none" stroke="#0c7880" stroke-width="3"/><path d="M3 10l17 8 17-8M20 18v20" stroke="#0c7880" stroke-width="2.500" fill="none"/><path d="M20 2v16M3 30l17-12 17 12" stroke="#5aa8b0" stroke-width="2" fill="none"/><path d="M20 6l12 6v12l-12-4z" fill="#13a0a8"/></svg>
<svg class="b" style="left:2290px;top:118px;" width="40" height="40" viewBox="0 0 40 40"><path d="M20 2l17 8v20l-17 8-17-8v-20z" fill="none" stroke="#0c7880" stroke-width="3"/><path d="M3 10l17 8 17-8M20 18v20" stroke="#0c7880" stroke-width="2.500" fill="none"/><path d="M20 2v16M3 30l17-12 17 12" stroke="#5aa8b0" stroke-width="2" fill="none"/><path d="M8 30l12-9 12 9-12 6z" fill="#2fd0d8"/></svg>
<svg class="b" style="left:2337px;top:118px;" width="40" height="40" viewBox="0 0 40 40"><path d="M20 2l17 8v20l-17 8-17-8v-20z" fill="none" stroke="#0c7880" stroke-width="3"/><path d="M3 10l17 8 17-8M20 18v20" stroke="#0c7880" stroke-width="2.500" fill="none"/><path d="M20 2v16M3 30l17-12 17 12" stroke="#5aa8b0" stroke-width="2" fill="none"/><path d="M6 13l12 6v14l-12-6z" fill="#13a0a8"/></svg>
<div class="b" style="left:2385px;top:119px;width:2px;height:38px;background:#dedede;"></div>
<svg class="b" style="left:2394px;top:118px;" width="40" height="40" viewBox="0 0 40 40"><path d="M4 8l8-6 26 26-8 8z" fill="#2fd0d8" stroke="#13a0a8" stroke-width="2"/><path d="M12 12l3-3M18 18l3-3M24 24l3-3M30 30l3-3" stroke="#0c7880" stroke-width="2"/></svg>
<div class="b" style="left:2442px;top:112px;width:2px;height:49px;background:#dadada;"></div>
<div class="b" style="left:2448px;top:119px;width:5px;height:38px;background:repeating-linear-gradient(180deg,#dadada 0 3.500px,transparent 3.500px 8.500px);"></div>
<svg class="b" style="left:2466px;top:118px;" width="40" height="40" viewBox="0 0 40 40"><path d="M6 10l12-8 16 8v18l-14 10-14-8z" fill="#f2dc28" stroke="#c8a810" stroke-width="2"/><path d="M20 14l14-4M20 14v10l-14-4M20 24l14 4" stroke="#c8a810" stroke-width="2.500" fill="none"/><circle cx="24" cy="12" r="5" fill="#e8c818"/></svg>
<svg class="b" style="left:2513px;top:118px;" width="40" height="40" viewBox="0 0 40 40"><path d="M2 3h16l3 5h17v4h-36z" fill="#9a9a9a"/><path d="M2 10h36v26h-36z" fill="#6a9ad8"/><path d="M2 10h36v4h-36z" fill="#8ab4e8"/></svg>
<div class="b" style="left:2559.4px;top:112px;width:2px;height:49px;background:#dadada;"></div>
<div class="b" style="left:2565px;top:119px;width:5px;height:38px;background:repeating-linear-gradient(180deg,#dadada 0 3.500px,transparent 3.500px 8.500px);"></div>
<svg class="b" style="left:2582.5px;top:118px;" width="40" height="40" viewBox="0 0 40 40"><path d="M20 1l7 8h-4.500v8.500h8.500v-4.500l8 7-8 7v-4.500h-8.500v8.500h4.500l-7 8-7-8h4.500v-8.500h-8.500v4.500l-8-7 8-7v4.500h8.500v-8.500h-4.500z" fill="#3465a4"/></svg>
<svg class="b" style="left:2630.5px;top:118px;" width="40" height="40" viewBox="0 0 40 40"><path d="M12 4q20-4 20 14q0 16-15 16q-10 0-13-9" fill="none" stroke="#3465a4" stroke-width="5.500"/><path d="M10 2l10 2-6 9z" fill="#3465a4"/></svg>
<svg class="b" style="left:2677px;top:118px;" width="40" height="40" viewBox="0 0 40 40"><path d="M4 8l6-5h26v14q0 16-18 20" fill="none" stroke="#204a87" stroke-width="4"/><path d="M12 14h14v6q0 8-8 10" fill="none" stroke="#3465a4" stroke-width="3.500"/><path d="M18 20h4q0 4-3 5" fill="none" stroke="#c0c8d8" stroke-width="3"/></svg>
<svg class="b" style="left:2725px;top:118px;" width="40" height="40" viewBox="0 0 40 40"><path d="M20 2v36" stroke="#204a87" stroke-width="5"/><path d="M1 20l9-7v5h6v4h-6v5zM39 20l-9-7v5h-6v4h6v5z" fill="#3465a4"/></svg>
<svg class="b" style="left:2772px;top:118px;" width="40" height="40" viewBox="0 0 40 40"><path d="M20 1l17 17h-9v20h-16v-20h-9z" fill="#3465a4"/><path d="M20 1l17 17h-9l-8-8z" fill="#5a8ad0"/></svg>
<svg class="b" style="left:2819.5px;top:118px;" width="40" height="40" viewBox="0 0 40 40"><path d="M20 39l17-17h-9v-20h-16v20h-9z" fill="#3465a4"/><path d="M12 2h16v8h-16z" fill="#5a8ad0"/></svg>
<svg class="b" style="left:2867px;top:118px;" width="40" height="40" viewBox="0 0 40 40"><rect x="2" y="2" width="36" height="36" fill="#f4f6fa" stroke="#5a8ad0" stroke-width="4" stroke-dasharray="5 3"/><rect x="3" y="21" width="15" height="16" fill="#f4f6fa" stroke="#204a87" stroke-width="4"/><path d="M20 19l10-10M24 8h8v8" stroke="#204a87" stroke-width="4" fill="none"/></svg>
<svg class="b" style="left:2914px;top:118px;" width="40" height="40" viewBox="0 0 40 40"><path d="M4 30l16-6 16 6-16 8z" fill="#a8acb0"/><path d="M3 10l14-6 20 3v14l-17 8-17-7z" fill="#3465a4"/><path d="M3 10l14-6 20 3-17 6z" fill="#5a8ad0"/><path d="M20 13v16l17-8v-14z" fill="#204a87"/></svg>
<svg class="b" style="left:2961.5px;top:118px;" width="40" height="40" viewBox="0 0 40 40"><ellipse cx="20" cy="30" rx="18" ry="7" fill="none" stroke="#d81818" stroke-width="4.500"/><path d="M6 8l14-6 14 6-4 6v10l-10 4-10-4v-10z" fill="#3465a4"/><path d="M12 8l8-3M22 12v12" stroke="#b8cce8" stroke-width="3"/></svg>
<svg class="b" style="left:3010px;top:118px;" width="40" height="40" viewBox="0 0 40 40"><g fill="#3465a4" stroke="#9aa4b0" stroke-width="1.500"><rect x="2" y="2" width="10" height="16"/><rect x="15" y="2" width="10" height="16"/><rect x="28" y="2" width="10" height="16"/><rect x="2" y="22" width="10" height="16"/><rect x="15" y="22" width="10" height="16"/><rect x="28" y="22" width="10" height="16"/></g></svg>
<svg class="b" style="left:3056.5px;top:118px;" width="40" height="40" viewBox="0 0 40 40"><path d="M20 1l12 6 7 14-5 2-2-4-2 14-10 6-10-6-2-14-2 4-5-2 7-14z" fill="#3465a4"/><path d="M20 1l12 6-12 5-12-5z" fill="#5a8ad0"/><ellipse cx="21" cy="20" rx="7" ry="4" fill="#e8eef8"/><circle cx="21" cy="20" r="2.800" fill="#203050"/></svg>
<div class="b" style="left:26px;top:170px;width:5px;height:38px;background:repeating-linear-gradient(180deg,#dadada 0 3.500px,transparent 3.500px 8.500px);"></div>
<div class="b" style="left:88.8px;top:166px;width:96px;height:44px;background:#c2dcf3;"></div>
<div class="b" style="left:135px;top:166px;width:4px;height:44px;background:#cde4f8;"></div>
<div class="b" style="left:326px;top:166px;width:144px;height:44px;background:#c2dcf3;"></div>
<div class="b" style="left:372px;top:166px;width:4px;height:44px;background:#cde4f8;"></div>
<div class="b" style="left:420px;top:166px;width:4px;height:44px;background:#cde4f8;"></div>
<svg class="b" style="left:44.5px;top:168px;" width="40" height="40" viewBox="0 0 40 40"><g stroke="#8a8a8a" stroke-width="3.200" stroke-dasharray="3 1.200"><path d="M3 8h34M3 16h34M3 24h34M3 32h34M8 3v34M16 3v34M24 3v34M32 3v34"/></g></svg>
<svg class="b" style="left:94px;top:168px;" width="40" height="40" viewBox="0 0 40 40"><path d="M10 20v-8q0-9 10-9t10 9v8" fill="none" stroke="#13a0a8" stroke-width="5"/><rect x="5" y="18" width="30" height="21" fill="#2fd0d8" stroke="#13a0a8" stroke-width="2"/><rect x="5" y="29" width="30" height="10" fill="#1fb4bc"/></svg>
<svg class="b" style="left:138px;top:168px;" width="40" height="40" viewBox="0 0 40 40"><path d="M4 17l4-5 28 18-4 5z" fill="#2fd0d8" stroke="#13a0a8" stroke-width="1.500"/><circle cx="29" cy="9" r="6" fill="#2fd0d8" stroke="#13a0a8" stroke-width="1.500"/></svg>
<svg class="b" style="left:187px;top:168px;" width="40" height="40" viewBox="0 0 40 40"><circle cx="6" cy="20" r="5" fill="#2fd0d8" stroke="#13a0a8" stroke-width="1.500"/><circle cx="20" cy="20" r="5" fill="#2fd0d8" stroke="#13a0a8" stroke-width="1.500"/><circle cx="34" cy="20" r="5" fill="#2fd0d8" stroke="#13a0a8" stroke-width="1.500"/></svg>
<svg class="b" style="left:234px;top:168px;" width="40" height="40" viewBox="0 0 40 40"><path d="M10 5l4-4 25 17-4 4zM2 20l4-4 25 17-4 4z" fill="#2fd0d8" stroke="#13a0a8" stroke-width="1.500"/></svg>
<svg class="b" style="left:282px;top:168px;" width="40" height="40" viewBox="0 0 40 40"><path d="M10 2h5v36h-5zM25 2h5v36h-5zM2 10h36v5h-36zM2 25h36v5h-36z" fill="#2fd0d8" stroke="#13a0a8" stroke-width="1.500"/></svg>
<svg class="b" style="left:330px;top:168px;" width="40" height="40" viewBox="0 0 40 40"><path d="M34 3l4 5-22 22-5-4z" fill="#2fd0d8" stroke="#13a0a8" stroke-width="1.500"/><ellipse cx="10" cy="30" rx="8.500" ry="7.500" fill="#13a0a8"/></svg>
<svg class="b" style="left:378px;top:168px;" width="40" height="40" viewBox="0 0 40 40"><path d="M34 3l4 5-32 30-5-4z" fill="#2fd0d8" stroke="#13a0a8" stroke-width="1.500"/><ellipse cx="20" cy="20" rx="11" ry="6.500" transform="rotate(-42 20 20)" fill="#13a0a8"/></svg>
<svg class="b" style="left:426px;top:168px;" width="40" height="40" viewBox="0 0 40 40"><path d="M17 5h7v25h-7z" fill="#2fd0d8" stroke="#13a0a8" stroke-width="1.500"/><path d="M2 29h36v7h-36z" fill="#13a0a8"/></svg>
<svg class="b" style="left:471px;top:168px;" width="40" height="40" viewBox="0 0 40 40"><path d="M20 0l9 10h-18zM20 40l9-10h-18zM0 20l10-9v18zM40 20l-10-9v18z" fill="#2fd0d8" stroke="#13a0a8" stroke-width="1.500"/><circle cx="20" cy="20" r="11" fill="none" stroke="#13a0a8" stroke-width="3.500"/></svg>
<svg class="b" style="left:519px;top:168px;" width="40" height="40" viewBox="0 0 40 40"><circle cx="20" cy="20" r="16.500" fill="none" stroke="#2fd0d8" stroke-width="5"/><circle cx="20" cy="20" r="9.500" fill="none" stroke="#13a0a8" stroke-width="3"/><circle cx="20" cy="20" r="5" fill="#2fd0d8"/></svg>
<svg class="b" style="left:568.5px;top:170px;" width="36" height="36" viewBox="0 0 40 40"><path d="M16.500 4h7v12.500h12.500v7h-12.500v12.500h-7v-12.500h-12.500v-7h12.500z" fill="#2fd0d8" stroke="#13a0a8" stroke-width="1.500"/></svg>
<svg class="b" style="left:613.5px;top:168px;" width="40" height="40" viewBox="0 0 40 40"><path d="M3 8l6-6 11 11 11-11 6 6-11 12 11 12-6 6-11-11-11 11-6-6 11-12z" fill="#2fd0d8" stroke="#13a0a8" stroke-width="1.500"/></svg>
<svg class="b" style="left:661px;top:168px;" width="40" height="40" viewBox="0 0 40 40"><path d="M13 8l20-6 4 3v16l-18 8-8-4z" fill="#2fd0d8" stroke="#0c7880" stroke-width="1.500"/><path d="M19 12l18-7v16l-18 8z" fill="#13a0a8"/><ellipse cx="9" cy="31" rx="8" ry="7" fill="#2fd0d8" stroke="#13a0a8" stroke-width="1.500"/></svg>
<svg class="b" style="left:707.5px;top:168px;" width="40" height="40" viewBox="0 0 40 40"><path d="M14 3h6v16l8-6 8 2v8l-6-2-10 6v10h-6z" fill="#5aa8b0"/><path d="M24 2h14v8h-14z" fill="#0c7880"/><path d="M2 18h10v6h-10zM2 30h10v6h-10z" fill="#0c7880"/></svg>
<svg class="b" style="left:756px;top:168px;" width="40" height="40" viewBox="0 0 40 40"><defs><linearGradient id="wp" x1="0" y1="0" x2="0" y2="1"><stop offset="0" stop-color="#38e0e8"/><stop offset="1" stop-color="#14a8b0"/></linearGradient></defs><rect x="1" y="1" width="38" height="38" fill="url(#wp)" stroke="#0c7880" stroke-width="2"/><rect x="9" y="18" width="9" height="9" fill="none" stroke="#5ad8e0" stroke-width="2.500"/></svg>
<div class="b" style="left:799.7px;top:163px;width:2px;height:49px;background:#dadada;"></div>
<div class="b" style="left:807px;top:170px;width:5px;height:38px;background:repeating-linear-gradient(180deg,#dadada 0 3.500px,transparent 3.500px 8.500px);"></div>
<svg class="b" style="left:825px;top:168px;" width="40" height="40" viewBox="0 0 40 40"><path d="M2 5l14-4 22 10v20l-14 8-22-12z" fill="#f2dc28" stroke="#c8a810" stroke-width="1.500"/><path d="M2 12l22 11 14-6M2 19l22 11 14-6M2 5l22 11 14-5M24 16v23M10 9v6M16 19v7M8 22v6M31 14v7M30 27v6" stroke="#8a7208" stroke-width="1.800" fill="none"/></svg>
<svg class="b" style="left:872.5px;top:168px;" width="40" height="40" viewBox="0 0 40 40"><path d="M1 4l12-3h26v9h-5v24l-6 5h-12l-6-5v-24h-9z" fill="#f2dc28" stroke="#c8a810" stroke-width="1.500"/><path d="M15 10v26M21 10v28M27 10v26" stroke="#8a7208" stroke-width="2.500"/><path d="M1 4h38v6h-38z" fill="#e8cc18"/></svg>
<svg class="b" style="left:920.5px;top:168px;" width="40" height="40" viewBox="0 0 40 40"><path d="M2 18l22-16 5 4-22 17zM10 24l22-16 5 4-22 17zM18 32l16-12 5 4-16 13z" fill="#f2dc28" stroke="#c8a810" stroke-width="1.500"/><path d="M30 2l6 4v32l-6-4z" fill="#c8a810"/></svg>
<svg class="b" style="left:967.5px;top:168px;" width="40" height="40" viewBox="0 0 40 40"><path d="M2 3h8v12h8v6h-8v8h10v8h-18zM24 3h14v34h-14v-8h7v-18h-7z" fill="#f2dc28" stroke="#8a7208" stroke-width="2"/></svg>
<svg class="b" style="left:1015px;top:168px;" width="40" height="40" viewBox="0 0 40 40"><rect x="1" y="4" width="38" height="32" fill="#f2dc28" stroke="#8a7208" stroke-width="2.500"/><path d="M7 11h12v5h-7v4h7v5h-12zM22 11h12v8l5 6h-17v-5h8v-3h-8z" fill="#8a7208"/></svg>
<svg class="b" style="left:1062px;top:168px;" width="40" height="40" viewBox="0 0 40 40"><path d="M2 16l14-13 14 2 9 12v14l-12 8-25-6z" fill="#f2dc28" stroke="#c8a810" stroke-width="1.500"/><path d="M16 3l11 16 12-2M27 19v20" stroke="#8a7208" stroke-width="2" fill="none"/><path d="M8 22h8v16l-8-2z" fill="#8a7208"/><path d="M27 19l12-2v14l-12 8z" fill="#d8bc14"/></svg>
<svg class="b" style="left:1109px;top:168px;" width="40" height="40" viewBox="0 0 40 40"><path d="M2 26l20-23 16 6v8l-20 22-16-6z" fill="#f2dc28" stroke="#c8a810" stroke-width="1.500"/><path d="M2 26l16 6 20-23M18 32v7" stroke="#8a7208" stroke-width="2" fill="none"/><path d="M18 32l20-22v8l-20 21z" fill="#d8bc14"/></svg>
<svg class="b" style="left:1156.5px;top:168px;" width="40" height="40" viewBox="0 0 40 40"><path d="M1 25l14-7 24 5-12 11-12 4z" fill="#f2dc28" stroke="#c8a810" stroke-width="1.500"/><path d="M1 25l14 6 24-8M15 31v7" stroke="#8a7208" stroke-width="2" fill="none"/><path d="M14 2h12v10h7l-13 14-13-14h7z" fill="#38c028" stroke="#208818" stroke-width="1.500"/></svg>
<svg class="b" style="left:1204.5px;top:168px;" width="40" height="40" viewBox="0 0 40 40"><path d="M2 2l36 6v30l-36-6z" fill="#f2dc28" stroke="#8a7208" stroke-width="3"/><path d="M8 9l10 2v9l-10-2zM24 12l9 2v9l-9-2zM8 23l10 2v8l-10-2zM24 26l9 2v8l-9-2z" fill="#f6f6e8"/></svg>
<svg class="b" style="left:1252px;top:168px;" width="40" height="40" viewBox="0 0 40 40"><path d="M12 14l20-10 6 16-20 10z" fill="#f2dc28" stroke="#c8a810" stroke-width="1.500"/><path d="M2 26l12-9 3 6z" fill="#c8a810"/><path d="M30 22l6 12" stroke="#8a7208" stroke-width="2"/></svg>
<svg class="b" style="left:1302px;top:170px;" width="36" height="36" viewBox="0 0 40 40"><path d="M8 10v28M24 10v28" stroke="#c8a810" stroke-width="4"/><path d="M6 10v28M22 10v28" stroke="#f6ec90" stroke-width="1.500"/><circle cx="8" cy="8" r="6.500" fill="#f2dc28" stroke="#c8a810" stroke-width="1.500"/><circle cx="24" cy="8" r="6.500" fill="#f2dc28" stroke="#c8a810" stroke-width="1.500"/></svg>
<svg class="b" style="left:1349px;top:184px;" width="14" height="9" viewBox="0 0 14 9"><path d="M1 1h12l-6 7z" fill="#222"/></svg>
<svg class="b" style="left:1372.5px;top:168px;" width="40" height="40" viewBox="0 0 40 40"><path d="M20 0v40" stroke="#8a7208" stroke-width="2.500"/><circle cx="20" cy="19" r="16" fill="#f2dc28" stroke="#c8a810" stroke-width="1.500"/><path d="M20 3v32l16-16z" fill="#3a2c00"/><path d="M4 19h16M20 19l-10-10M20 19l-10 10" stroke="#8a7208" stroke-width="1.500"/></svg>
<svg class="b" style="left:1419px;top:168px;" width="40" height="40" viewBox="0 0 40 40"><circle cx="20" cy="20" r="15" fill="#f2dc28" stroke="#c8a810" stroke-width="6" stroke-dasharray="6 3.500"/><circle cx="20" cy="20" r="9" fill="#f8e850" stroke="#8a7208" stroke-width="2"/><circle cx="20" cy="20" r="3.500" fill="#c8a810"/></svg>
<svg class="b" style="left:1467px;top:168px;" width="40" height="40" viewBox="0 0 40 40"><path d="M2 30l10-8h20l-10 8zM8 22l10-8h20l-10 8zM14 14l10-8h14l-10 8z" fill="#f2dc28" stroke="#c8a810" stroke-width="1.500"/><path d="M2 30h20v4h-20zM8 22h20v3h-20z" fill="#c8a810"/></svg>
<svg class="b" style="left:1514px;top:168px;" width="40" height="40" viewBox="0 0 40 40"><path d="M1 3l18 8 4-3 16 6v24l-16-6-4 3-18-8z" fill="#f2dc28" stroke="#c8a810" stroke-width="1.500"/><path d="M23 8v24l16 6v-24z" fill="#d8bc14"/><path d="M1 27l18 8 4-3" stroke="#8a7208" stroke-width="2" fill="none"/></svg>
<svg class="b" style="left:1564.5px;top:184px;" width="14" height="9" viewBox="0 0 14 9"><path d="M1 1h12l-6 7z" fill="#222"/></svg>
<svg class="b" style="left:1589px;top:170px;" width="36" height="36" viewBox="0 0 40 40"><path d="M8 2l10-2v18l12 2 4 4v14h-8v-8h-6v10h-10z" fill="#f2dc28" stroke="#8a7208" stroke-width="1.800"/><path d="M12 4v30M18 20v14" stroke="#8a7208" stroke-width="2"/></svg>
<svg class="b" style="left:1635.5px;top:168px;" width="40" height="40" viewBox="0 0 40 40"><path d="M2 6l6-4 6 4v6l6-3 6 3v6l6-3 6 3v20h-36z" fill="#f2dc28" stroke="#c8a810" stroke-width="1.500"/><path d="M8 6v32M14 12v26M20 10v28M26 16v22M32 16v22" stroke="#c8a810" stroke-width="2.500"/></svg>
<svg class="b" style="left:1682px;top:168px;" width="40" height="40" viewBox="0 0 40 40"><circle cx="26" cy="10" r="9.500" fill="#f2dc28" stroke="#c8a810" stroke-width="1.500"/><circle cx="10" cy="23" r="9.500" fill="#f2dc28" stroke="#c8a810" stroke-width="1.500"/><circle cx="29" cy="31" r="9" fill="#f2dc28" stroke="#c8a810" stroke-width="1.500"/><circle cx="23" cy="7" r="3" fill="#fcf8c0"/><circle cx="7" cy="20" r="3" fill="#fcf8c0"/><circle cx="26" cy="28" r="3" fill="#fcf8c0"/></svg>
<svg class="b" style="left:1732px;top:184px;" width="14" height="9" viewBox="0 0 14 9"><path d="M1 1h12l-6 7z" fill="#222"/></svg>
<svg class="b" style="left:1755px;top:168px;" width="40" height="40" viewBox="0 0 40 40"><rect x="1" y="3" width="38" height="34" fill="#f2dc28" stroke="#c8a810" stroke-width="2"/><path d="M1 12h38M1 21h38M1 29h38" stroke="#8a7208" stroke-width="2.500"/><path d="M12 3v34" stroke="#8a7208" stroke-width="2"/></svg>
<svg class="b" style="left:1802.5px;top:168px;" width="40" height="40" viewBox="0 0 40 40"><path d="M8 3l24 10q6 6 6 14t-8 10l-24-12q-5-4-5-12t7-10z" fill="#f2dc28" stroke="#c8a810" stroke-width="1.500"/><ellipse cx="9" cy="14" rx="6" ry="10" fill="#e8cc18" stroke="#8a7208" stroke-width="1.800"/></svg>
<svg class="b" style="left:1851.5px;top:184px;" width="14" height="9" viewBox="0 0 14 9"><path d="M1 1h12l-6 7z" fill="#222"/></svg>
<svg class="b" style="left:1875px;top:168px;" width="40" height="40" viewBox="0 0 40 40"><rect x="8" y="2" width="24" height="34" fill="#d81818"/><rect x="24" y="5" width="14" height="28" fill="#283848"/><path d="M28 10h6v5h-6zM28 22h6v5h-6z" fill="#d0d8e0"/><rect x="1" y="12" width="24" height="24" fill="#3465a4"/><rect x="1" y="12" width="16" height="24" fill="#5a8ad0"/></svg>
<svg class="b" style="left:1925.5px;top:170px;" width="36" height="36" viewBox="0 0 40 40"><path d="M15.500 2h9v13.500h13.500v9h-13.500v13.500h-9v-13.500h-13.500v-9h13.500z" fill="#3465a4"/><path d="M15.500 2h4v36h-4z" fill="#5a8ad0"/></svg>
<svg class="b" style="left:1971.5px;top:170px;" width="36" height="36" viewBox="0 0 40 40"><rect x="2" y="15.500" width="36" height="9" fill="#3465a4"/><rect x="2" y="15.500" width="36" height="3.500" fill="#5a8ad0"/><ellipse cx="20" cy="29" rx="14" ry="2" fill="#d8d8d8"/></svg>
<svg class="b" style="left:2017.5px;top:168px;" width="40" height="40" viewBox="0 0 40 40"><path d="M2 14q2-12 16-13q10 2 14 14l6 16-14 8q-16-2-22-25z" fill="#3465a4"/><path d="M14 4q10-2 14 6l2 8q-8 2-14-4z" fill="#1a3868"/><path d="M22 32l16-4v4l-14 7z" fill="#5a8ad0"/></svg>
<div class="b" style="left:2061px;top:163px;width:2px;height:49px;background:#dadada;"></div>
<div class="b" style="left:2068px;top:170px;width:5px;height:38px;background:repeating-linear-gradient(180deg,#dadada 0 3.500px,transparent 3.500px 8.500px);"></div>
<svg class="b" style="left:2087px;top:168px;" width="40" height="40" viewBox="0 0 40 40"><path d="M6 33l28-27" stroke="#b8bcbc" stroke-width="4"/><circle cx="6" cy="33" r="6" fill="#f0d820" stroke="#b89a10" stroke-width="1.200"/><circle cx="33" cy="7" r="6" fill="#f0d820" stroke="#b89a10" stroke-width="1.200"/></svg>
<svg class="b" style="left:2134px;top:168px;" width="40" height="40" viewBox="0 0 40 40"><path d="M5 34l8-18 9 17 9-26" stroke="#b8bcbc" stroke-width="3.500" fill="none"/><circle cx="5" cy="34" r="5.5" fill="#f0d820" stroke="#b89a10" stroke-width="1.200"/><circle cx="13" cy="16" r="5.5" fill="#f0d820" stroke="#b89a10" stroke-width="1.200"/><circle cx="22" cy="33" r="5.5" fill="#f0d820" stroke="#b89a10" stroke-width="1.200"/><circle cx="31" cy="7" r="5.5" fill="#f0d820" stroke="#b89a10" stroke-width="1.200"/></svg>
<svg class="b" style="left:2182px;top:168px;" width="40" height="40" viewBox="0 0 40 40"><circle cx="18" cy="20" r="15.500" fill="none" stroke="#b8bcbc" stroke-width="4"/><circle cx="18" cy="20" r="9" fill="none" stroke="#d8dada" stroke-width="2"/><circle cx="19" cy="20" r="5.5" fill="#f0d820" stroke="#b89a10" stroke-width="1.200"/><circle cx="33" cy="20" r="5.5" fill="#f0d820" stroke="#b89a10" stroke-width="1.200"/></svg>
<svg class="b" style="left:2230px;top:168px;" width="40" height="40" viewBox="0 0 40 40"><path d="M7 7q22 0 24 26" stroke="#b8bcbc" stroke-width="4" fill="none"/><circle cx="7" cy="7" r="6" fill="#f0d820" stroke="#b89a10" stroke-width="1.200"/><circle cx="7" cy="33" r="6" fill="#f0d820" stroke="#b89a10" stroke-width="1.200"/><circle cx="31" cy="33" r="6" fill="#f0d820" stroke="#b89a10" stroke-width="1.200"/></svg>
<svg class="b" style="left:2277px;top:168px;" width="40" height="40" viewBox="0 0 40 40"><ellipse cx="20" cy="21" rx="17" ry="8" transform="rotate(-18 20 21)" fill="none" stroke="#b8bcbc" stroke-width="4"/><circle cx="33" cy="7" r="6" fill="#f0d820" stroke="#b89a10" stroke-width="1.200"/><circle cx="7" cy="34" r="6" fill="#f0d820" stroke="#b89a10" stroke-width="1.200"/></svg>
<svg class="b" style="left:2324.5px;top:168px;" width="40" height="40" viewBox="0 0 40 40"><path d="M20 4l15 9v14l-15 9-15-9v-14z" fill="none" stroke="#b8bcbc" stroke-width="3.500"/><circle cx="20" cy="20" r="10" fill="none" stroke="#d4d6d6" stroke-width="2"/><circle cx="19" cy="22" r="5.5" fill="#f0d820" stroke="#b89a10" stroke-width="1.200"/><circle cx="33" cy="17" r="5.5" fill="#f0d820" stroke="#b89a10" stroke-width="1.200"/></svg>
<svg class="b" style="left:2371.5px;top:168px;" width="40" height="40" viewBox="0 0 40 40"><rect x="6" y="7" width="27" height="27" fill="none" stroke="#b8bcbc" stroke-width="4.500"/><circle cx="33" cy="7" r="6" fill="#f0d820" stroke="#b89a10" stroke-width="1.200"/><circle cx="6" cy="34" r="6" fill="#f0d820" stroke="#b89a10" stroke-width="1.200"/></svg>
<svg class="b" style="left:2417px;top:168px;" width="40" height="40" viewBox="0 0 40 40"><path d="M3 35l16-31h6l12 31h-7l-3-8h-12l-4 8zM18 21h8l-4-11z" fill="#e8cc20" stroke="#b89a10" stroke-width="1.500"/></svg>
<svg class="b" style="left:2465px;top:168px;" width="40" height="40" viewBox="0 0 40 40"><path d="M7 2v34M33 2v34M14 2v12M22 2v12M27 2v12" stroke="#b8bcbc" stroke-width="4"/><path d="M3 20h34" stroke="#444" stroke-width="3.500"/><circle cx="20" cy="19" r="4" fill="#f0d820" stroke="#b89a10" stroke-width="1.200"/><circle cx="6" cy="35" r="5" fill="#f0d820" stroke="#b89a10" stroke-width="1.200"/><circle cx="34" cy="35" r="5" fill="#f0d820" stroke="#b89a10" stroke-width="1.200"/></svg>
<svg class="b" style="left:2512px;top:168px;" width="40" height="40" viewBox="0 0 40 40"><path d="M7 28q2-22 13-22t14 24" stroke="#b8bcbc" stroke-width="4" fill="none"/><circle cx="19" cy="7" r="6.5" fill="#f0d820" stroke="#b89a10" stroke-width="1.200"/><circle cx="7" cy="29" r="6" fill="#f0d820" stroke="#b89a10" stroke-width="1.200"/><circle cx="33" cy="32" r="6" fill="#f0d820" stroke="#b89a10" stroke-width="1.200"/></svg>
<svg class="b" style="left:2561px;top:168px;" width="40" height="40" viewBox="0 0 40 40"><circle cx="20" cy="20" r="7" fill="#f0d820" stroke="#b89a10" stroke-width="1.200"/></svg>
<svg class="b" style="left:2608px;top:168px;" width="40" height="40" viewBox="0 0 40 40"><path d="M2 14l22-10 14-3-4 8-8 5 12-2-3 9-7 4 8 1-6 9-30 3z" fill="#f2dc28" stroke="#c8a810" stroke-width="1.500"/><path d="M2 14l10 2v22l-10 0z" fill="#d8bc14"/></svg>
<svg class="b" style="left:2655px;top:168px;" width="40" height="40" viewBox="0 0 40 40"><path d="M7 4v32M33 4v32M7 20h26" stroke="#b8bcbc" stroke-width="5"/><circle cx="7" cy="4" r="4.5" fill="#f0d820" stroke="#b89a10" stroke-width="1.200"/><circle cx="33" cy="4" r="4.5" fill="#f0d820" stroke="#b89a10" stroke-width="1.200"/><circle cx="7" cy="35" r="6" fill="#f0d820" stroke="#b89a10" stroke-width="1.200"/><circle cx="33" cy="35" r="6" fill="#f0d820" stroke="#b89a10" stroke-width="1.200"/></svg>
<svg class="b" style="left:2703px;top:168px;" width="40" height="40" viewBox="0 0 40 40"><path d="M2 5h20l10 10v12" fill="none" stroke="#8a8a80" stroke-width="4"/><rect x="2" y="5" width="20" height="16" fill="#a8a898" stroke="#78786c" stroke-width="2"/><path d="M5 10h14M5 15h14" stroke="#e8e4c0" stroke-width="2.500"/><circle cx="32" cy="32" r="5.500" fill="#a08a10" stroke="#5a4c08" stroke-width="1.500"/></svg>
<svg class="b" style="left:886px;top:214px;" width="1823" height="1243" viewBox="886 214 1823 1243"><defs>
<linearGradient id="gP1" gradientUnits="userSpaceOnUse" x1="1400" y1="600" x2="1700" y2="560"><stop offset="0" stop-color="#a9fc93"/><stop offset="1" stop-color="#9dfa86"/></linearGradient>
<linearGradient id="gP2" gradientUnits="userSpaceOnUse" x1="1690" y1="560" x2="1770" y2="470"><stop offset="0" stop-color="#86f976"/><stop offset="0.6" stop-color="#6cf05f"/><stop offset="1" stop-color="#55dc4c"/></linearGradient>
<linearGradient id="gP3" gradientUnits="userSpaceOnUse" x1="1930" y1="515" x2="1945" y2="575"><stop offset="0" stop-color="#45d040"/><stop offset="0.35" stop-color="#62ea58"/><stop offset="1" stop-color="#7af66a"/></linearGradient>
<linearGradient id="gP4" gradientUnits="userSpaceOnUse" x1="1850" y1="580" x2="2200" y2="900"><stop offset="0" stop-color="#a6fb8e"/><stop offset="0.45" stop-color="#c6fca8"/><stop offset="0.8" stop-color="#e4fdc2"/><stop offset="1" stop-color="#f0fdca"/></linearGradient>
<linearGradient id="gP5" gradientUnits="userSpaceOnUse" x1="1690" y1="980" x2="2080" y2="720"><stop offset="0" stop-color="#d6fcb8"/><stop offset="0.3" stop-color="#befba4"/><stop offset="0.55" stop-color="#a8fa90"/><stop offset="0.8" stop-color="#80f66e"/><stop offset="1" stop-color="#6cf05e"/></linearGradient>
<linearGradient id="gP5b" gradientUnits="userSpaceOnUse" x1="1700" y1="960" x2="1625" y2="1200"><stop offset="0" stop-color="#9efa86" stop-opacity="0"/><stop offset="0.5" stop-color="#5fe655" stop-opacity="0.9"/><stop offset="1" stop-color="#2fc230"/></linearGradient>
<linearGradient id="gP5c" gradientUnits="userSpaceOnUse" x1="2080" y1="870" x2="2140" y2="815"><stop offset="0" stop-color="#76f466" stop-opacity="0"/><stop offset="0.5" stop-color="#4cd946"/><stop offset="1" stop-color="#6cef5e"/></linearGradient>
<linearGradient id="gP6a" gradientUnits="userSpaceOnUse" x1="1560" y1="600" x2="1585" y2="670"><stop offset="0" stop-color="#4bdc46"/><stop offset="0.5" stop-color="#6ff260"/><stop offset="1" stop-color="#8cf97a"/></linearGradient>
<linearGradient id="gP6b" gradientUnits="userSpaceOnUse" x1="1620" y1="660" x2="1560" y2="1230"><stop offset="0" stop-color="#aefb96"/><stop offset="0.18" stop-color="#ccfcae"/><stop offset="0.38" stop-color="#eafdc6"/><stop offset="0.6" stop-color="#ecfdc8"/><stop offset="0.75" stop-color="#d8fcb8"/><stop offset="0.9" stop-color="#90f87c"/><stop offset="1" stop-color="#38c838"/></linearGradient>
<linearGradient id="gB" gradientUnits="userSpaceOnUse" x1="1300" y1="745" x2="1275" y2="895"><stop offset="0" stop-color="#3c2628"/><stop offset="0.5" stop-color="#684444"/><stop offset="1" stop-color="#825656"/></linearGradient>
<linearGradient id="gA1l" gradientUnits="userSpaceOnUse" x1="1420" y1="770" x2="1570" y2="1260"><stop offset="0" stop-color="#8a5858"/><stop offset="0.3" stop-color="#a56a6a"/><stop offset="0.7" stop-color="#b57575"/><stop offset="1" stop-color="#a06666"/></linearGradient>
<linearGradient id="gA2u" gradientUnits="userSpaceOnUse" x1="1940" y1="875" x2="2160" y2="940"><stop offset="0" stop-color="#5e3e40"/><stop offset="0.5" stop-color="#45292c"/><stop offset="1" stop-color="#241416"/></linearGradient>
<linearGradient id="gA2f" gradientUnits="userSpaceOnUse" x1="1930" y1="880" x2="1615" y2="1270"><stop offset="0" stop-color="#7a4e4e"/><stop offset="0.6" stop-color="#7c5050"/><stop offset="1" stop-color="#5c3a3c"/></linearGradient>
<linearGradient id="gR4" gradientUnits="userSpaceOnUse" x1="1700" y1="700" x2="1600" y2="1250"><stop offset="0" stop-color="#a36a6a"/><stop offset="0.5" stop-color="#b87878"/><stop offset="1" stop-color="#a56c6c"/></linearGradient>
<linearGradient id="gR1" gradientUnits="userSpaceOnUse" x1="1600" y1="584" x2="1602" y2="601"><stop offset="0" stop-color="#8c5a5a"/><stop offset="0.5" stop-color="#a56a6a"/><stop offset="1" stop-color="#9a6262"/></linearGradient>
</defs><path d="M1301.3 748.7C1306.5 746.3 1311.5 743.1 1317.0 741.6C1323.7 739.8 1331.0 740.5 1338.0 740.0L1338.0 740.0C1332.8 747.6 1327.0 754.8 1322.4 762.7C1317.6 771.1 1313.6 780.0 1310.0 789.0C1306.6 797.5 1303.5 806.2 1301.3 815.0C1298.4 826.5 1297.5 838.5 1296.0 850.3C1294.6 862.0 1293.7 873.7 1292.6 885.4L1292.6 885.4L1257.5 895.0L1257.5 895.0C1258.1 885.9 1258.5 876.9 1259.3 867.8C1260.6 853.2 1261.4 838.3 1264.5 824.0C1267.1 812.1 1270.6 800.3 1275.0 789.0C1278.5 780.0 1281.6 770.3 1287.3 762.7C1291.2 757.5 1296.6 753.4 1301.3 748.7Z" fill="url(#gB)" /><path d="M1338.0 740.0C1339.8 739.3 1341.6 738.4 1343.4 738.0C1351.4 736.0 1359.8 742.7 1368.0 745.0L1368.0 745.0C1363.3 755.6 1358.3 766.0 1354.0 776.7C1349.4 788.2 1344.8 799.8 1341.6 811.7C1338.2 824.3 1336.4 837.4 1334.6 850.3C1333.0 861.6 1332.2 873.1 1331.0 884.5L1331.0 884.5C1325.2 885.3 1319.4 887.1 1313.6 887.0C1306.6 886.9 1299.6 884.1 1292.6 882.7L1292.6 882.7C1293.7 871.9 1294.6 861.1 1296.0 850.3C1297.5 838.5 1298.4 826.5 1301.3 815.0C1303.5 806.2 1306.6 797.5 1310.0 789.0C1313.6 780.0 1317.6 771.1 1322.4 762.7C1327.0 754.8 1332.8 747.6 1338.0 740.0Z" fill="#a36666" /><path d="M1355.0 677.0C1358.0 675.6 1361.3 674.7 1364.0 672.9C1367.8 670.4 1370.7 666.6 1373.7 663.2C1381.1 654.7 1385.6 643.8 1391.5 634.1C1398.0 623.3 1403.9 612.1 1410.9 601.7C1418.4 590.5 1426.6 579.8 1435.1 569.4C1442.8 559.9 1451.0 550.7 1459.4 541.9C1469.7 531.2 1480.7 521.1 1491.7 511.2C1502.2 501.8 1512.8 492.3 1524.0 483.7C1534.4 475.7 1545.3 468.0 1556.4 461.0C1568.9 453.1 1582.3 446.7 1595.2 439.5C1598.8 437.5 1602.4 435.5 1606.0 433.5L1640.9 435.9C1651.7 437.5 1662.5 438.7 1673.2 440.7C1684.1 442.7 1695.0 445.0 1705.6 448.0C1716.5 451.1 1727.4 455.0 1737.9 459.3C1748.9 463.8 1759.9 468.9 1770.3 474.7C1781.5 480.9 1792.1 488.4 1802.6 495.7C1810.8 501.4 1818.9 507.4 1826.9 513.5C1832.9 518.0 1838.7 522.7 1844.6 527.3L1886.0 522.0C1906.7 520.8 1927.3 519.0 1948.0 518.5C1958.7 518.3 1969.3 518.3 1980.0 518.3C1997.8 518.3 2016.0 515.7 2033.4 519.1C2038.8 520.2 2044.4 521.3 2049.5 523.2C2055.8 525.6 2061.4 529.7 2067.3 532.9L2080.3 554.7C2084.6 562.2 2089.1 569.7 2093.2 577.3C2097.8 585.8 2102.0 594.5 2106.2 603.2C2110.6 612.3 2114.9 621.5 2119.1 630.7C2123.5 640.4 2127.9 650.0 2132.0 659.8C2136.0 669.4 2139.8 679.1 2143.4 688.9C2146.8 698.0 2149.7 707.3 2153.0 716.4C2154.6 720.9 2156.2 725.5 2157.9 730.0C2161.7 740.3 2166.5 750.2 2170.0 760.5C2174.5 773.7 2177.5 787.5 2181.2 801.0C2185.6 817.1 2190.4 833.1 2194.2 849.4C2198.0 865.5 2201.0 881.7 2204.0 898.0C2207.0 914.1 2209.1 930.4 2212.0 946.5C2214.4 959.4 2216.7 972.3 2219.6 985.0C2221.1 991.7 2223.2 998.3 2224.5 1005.0C2225.9 1011.9 2226.6 1019.0 2227.7 1026.0L2225.3 1021.3C2223.4 1013.2 2221.9 1005.0 2219.6 997.0C2217.3 988.8 2214.7 980.7 2211.6 972.8C2208.3 964.5 2204.6 956.3 2200.2 948.5C2196.0 941.0 2190.7 934.2 2186.0 927.0C2182.2 921.1 2179.2 914.6 2174.8 909.3C2169.0 902.3 2160.9 897.2 2153.7 891.5C2145.8 885.3 2137.7 879.3 2129.4 873.7C2119.0 866.7 2108.2 860.0 2097.0 854.3C2086.6 849.0 2075.6 844.7 2064.7 840.6C2054.1 836.6 2043.4 832.3 2032.4 830.0C2021.8 827.8 2010.8 827.6 2000.0 826.8C1986.7 825.8 1973.3 825.4 1960.0 825.0C1947.3 824.6 1934.7 824.6 1922.0 824.4L1895.9 836.3C1880.4 844.0 1864.8 851.6 1849.4 859.5C1828.6 870.2 1807.2 880.2 1787.4 892.7C1765.6 906.4 1743.9 921.3 1725.4 939.0C1708.0 955.7 1692.6 975.0 1679.0 995.0C1665.8 1014.4 1654.3 1035.5 1644.8 1057.0C1635.9 1077.0 1628.7 1097.9 1623.0 1119.0C1617.5 1139.3 1613.7 1160.2 1610.7 1181.0C1607.3 1204.5 1606.6 1228.3 1604.5 1252.0L1590.6 1255.0C1590.1 1240.7 1589.6 1226.3 1589.0 1212.0C1588.1 1191.3 1587.6 1170.6 1586.0 1150.0C1583.9 1124.0 1580.8 1098.1 1576.7 1072.4C1572.5 1046.4 1567.6 1020.5 1561.0 995.0C1554.2 968.8 1546.2 942.7 1536.4 917.5C1531.5 904.8 1525.7 892.5 1520.4 880.0C1514.5 866.0 1508.8 852.0 1502.9 838.0C1497.2 824.5 1491.4 811.1 1485.4 797.7C1479.7 784.8 1474.2 771.7 1467.8 759.2C1461.4 746.6 1455.5 733.4 1446.8 722.4C1440.2 714.1 1432.4 706.1 1424.0 699.6C1416.0 693.4 1407.1 687.5 1397.7 683.8C1389.4 680.5 1380.3 678.7 1371.4 677.7C1366.0 677.1 1360.5 677.2 1355.0 677.0Z" fill="#b4fb9a" stroke="#b4fb9a" stroke-width="1"/><path d="M1355.0 677.0C1358.0 675.6 1361.3 674.7 1364.0 672.9C1367.8 670.4 1370.7 666.6 1373.7 663.2C1381.1 654.7 1385.6 643.8 1391.5 634.1C1398.0 623.3 1403.9 612.1 1410.9 601.7C1418.4 590.5 1426.6 579.8 1435.1 569.4C1442.8 559.9 1451.0 550.7 1459.4 541.9C1469.7 531.2 1480.7 521.1 1491.7 511.2C1502.2 501.8 1512.8 492.3 1524.0 483.7C1534.4 475.7 1545.3 468.0 1556.4 461.0C1568.9 453.1 1582.3 446.7 1595.2 439.5C1598.8 437.5 1602.4 435.5 1606.0 433.5L1606.0 433.5L1742.8 590.0L1742.8 596.0L1742.8 606.0L1739.5 614.6C1728.2 611.6 1717.0 608.0 1705.6 605.7C1694.9 603.5 1684.0 602.0 1673.2 600.8C1659.8 599.3 1646.3 598.5 1632.8 598.4C1619.3 598.3 1605.7 598.8 1592.3 600.0C1580.3 601.1 1568.3 603.0 1556.4 605.0C1545.6 606.8 1534.7 608.8 1524.0 611.4C1513.1 614.1 1502.3 617.4 1491.7 621.1C1480.8 624.9 1470.1 629.6 1459.4 634.1C1448.5 638.7 1437.8 643.8 1427.0 648.6L1427.0 648.6C1416.3 652.7 1405.7 656.9 1395.0 661.0C1384.7 665.0 1374.1 668.5 1364.0 672.9C1361.0 674.2 1358.0 675.6 1355.0 677.0Z" fill="url(#gP1)" /><path d="M1606.0 433.5C1617.6 434.3 1629.3 434.6 1640.9 435.9C1651.7 437.1 1662.5 438.7 1673.2 440.7C1684.1 442.7 1695.0 445.0 1705.6 448.0C1716.5 451.1 1727.4 455.0 1737.9 459.3C1748.9 463.8 1759.9 468.9 1770.3 474.7C1781.5 480.9 1792.1 488.4 1802.6 495.7C1810.8 501.4 1818.9 507.4 1826.9 513.5C1832.9 518.0 1838.7 522.7 1844.6 527.3L1844.6 527.3C1833.8 528.4 1821.8 526.2 1812.3 530.5C1805.7 533.5 1800.0 539.2 1794.5 544.2C1788.6 549.6 1783.2 555.7 1778.3 562.0C1773.5 568.1 1769.0 574.6 1765.4 581.4C1762.9 586.1 1761.1 591.1 1758.9 596.0L1758.9 596.0L1742.8 590.0L1742.8 590.0L1606.0 433.5Z" fill="url(#gP2)" /><path d="M1844.6 527.3C1858.4 525.5 1872.2 523.4 1886.0 522.0C1906.6 520.0 1927.3 519.0 1948.0 518.5C1958.7 518.3 1969.3 518.3 1980.0 518.3C1997.8 518.3 2016.0 515.7 2033.4 519.1C2038.8 520.2 2044.4 521.3 2049.5 523.2C2055.8 525.6 2061.4 529.7 2067.3 532.9L2067.3 533.5C2038.2 540.8 2009.1 548.3 1980.0 555.5C1953.4 562.1 1926.7 568.7 1900.0 575.0C1863.4 583.7 1826.7 591.7 1790.0 600.0L1790.0 600.0C1786.1 603.5 1779.8 610.8 1778.3 610.6C1776.4 610.4 1781.7 597.2 1784.8 591.1C1787.4 586.0 1791.0 581.2 1794.5 576.6C1799.4 570.2 1805.2 564.6 1810.7 558.8C1816.0 553.3 1821.3 547.8 1826.9 542.6C1832.6 537.3 1838.7 532.4 1844.6 527.3Z" fill="url(#gP3)" /><path d="M1790.0 600.0C1826.7 591.7 1863.4 583.7 1900.0 575.0C1926.7 568.7 1953.4 562.1 1980.0 555.5C2009.1 548.3 2038.2 540.8 2067.3 533.5L2067.3 532.9C2071.6 540.2 2076.0 547.4 2080.3 554.7C2084.7 562.2 2089.1 569.7 2093.2 577.3C2097.8 585.8 2102.0 594.5 2106.2 603.2C2110.6 612.3 2114.9 621.5 2119.1 630.7C2123.5 640.4 2127.9 650.0 2132.0 659.8C2136.0 669.4 2139.8 679.1 2143.4 688.9C2146.8 698.0 2149.7 707.3 2153.0 716.4C2154.6 720.9 2156.2 725.5 2157.9 730.0C2161.7 740.3 2166.5 750.2 2170.0 760.5C2174.5 773.7 2177.5 787.5 2181.2 801.0C2185.6 817.1 2190.4 833.1 2194.2 849.4C2198.0 865.5 2201.0 881.7 2204.0 898.0C2207.0 914.1 2209.1 930.4 2212.0 946.5C2214.4 959.4 2216.7 972.3 2219.6 985.0C2221.1 991.7 2223.2 998.3 2224.5 1005.0C2225.9 1011.9 2226.6 1019.0 2227.7 1026.0L2227.7 1026.0L2178.0 914.2L2178.0 914.2C2175.3 910.4 2172.5 906.7 2170.0 902.8C2163.9 893.5 2159.4 883.3 2153.7 873.7C2148.5 864.9 2143.3 856.2 2137.5 847.8C2130.1 837.1 2121.5 827.2 2113.3 817.0C2102.8 803.9 2092.2 790.8 2081.0 778.3C2070.5 766.6 2060.0 755.0 2048.5 744.3C2039.1 735.5 2028.9 727.5 2018.9 719.4C2008.3 710.8 1997.7 702.2 1986.5 694.3C1976.0 686.9 1965.1 680.0 1954.0 673.5C1943.5 667.3 1932.6 661.6 1921.8 656.0C1911.1 650.5 1900.3 645.1 1889.4 640.0C1878.7 635.0 1867.8 630.2 1857.0 625.5C1846.3 620.8 1835.6 615.9 1824.7 611.8C1813.5 607.6 1801.9 604.5 1790.5 600.8Z" fill="url(#gP4)" /><path d="M1790.5 618.6C1801.9 621.7 1813.5 624.2 1824.7 628.0C1835.7 631.7 1846.3 636.5 1857.0 641.0C1867.9 645.6 1878.7 650.4 1889.4 655.5C1900.3 660.7 1911.2 665.9 1921.8 671.7C1932.8 677.7 1943.5 684.2 1954.0 691.0C1965.1 698.2 1975.9 705.8 1986.5 713.7C1997.6 722.0 2008.6 730.4 2018.9 739.6C2035.5 754.3 2049.6 771.7 2064.7 788.0C2075.6 799.8 2086.5 811.5 2097.0 823.6C2108.1 836.3 2118.6 849.5 2129.4 862.4C2137.5 872.1 2145.1 882.3 2153.7 891.5C2159.4 897.6 2165.6 903.4 2171.5 909.3L2171.5 909.3C2165.6 903.4 2160.0 897.0 2153.7 891.5C2146.1 884.9 2137.7 879.3 2129.4 873.7C2119.0 866.7 2108.2 860.0 2097.0 854.3C2086.6 849.0 2075.6 844.7 2064.7 840.6C2054.1 836.6 2043.4 832.3 2032.4 830.0C2021.8 827.8 2010.8 827.6 2000.0 826.8C1986.7 825.8 1973.3 825.4 1960.0 825.0C1947.3 824.6 1934.7 824.6 1922.0 824.4L1895.9 836.3C1880.4 844.0 1864.8 851.6 1849.4 859.5C1828.6 870.2 1807.2 880.2 1787.4 892.7C1765.6 906.4 1743.9 921.3 1725.4 939.0C1708.0 955.7 1692.6 975.0 1679.0 995.0C1665.8 1014.4 1654.3 1035.5 1644.8 1057.0C1635.9 1077.0 1628.7 1097.9 1623.0 1119.0C1617.5 1139.3 1613.7 1160.2 1610.7 1181.0C1607.3 1204.5 1606.6 1228.3 1604.5 1252.0L1604.5 1252.0L1603.0 1253.7L1603.0 1253.7C1604.0 1239.8 1604.8 1225.9 1606.0 1212.0C1607.7 1191.3 1609.9 1170.6 1612.3 1150.0C1615.4 1124.1 1618.6 1098.1 1623.0 1072.4C1627.4 1046.5 1633.0 1020.7 1638.6 995.0C1644.3 969.1 1650.3 943.2 1657.0 917.5C1663.3 893.2 1670.7 869.2 1677.4 845.0C1682.0 828.7 1685.8 812.1 1691.0 796.0C1695.4 782.4 1700.6 769.0 1705.6 755.6C1710.8 741.5 1716.1 727.4 1721.7 713.5C1726.9 700.5 1732.1 687.4 1737.9 674.7C1742.9 663.7 1749.1 653.3 1754.0 642.3C1756.9 635.9 1759.5 629.4 1762.2 622.9L1762.2 622.9L1790.5 618.6Z" fill="url(#gP5)" /><path d="M1790.5 618.6C1801.9 621.7 1813.5 624.2 1824.7 628.0C1835.7 631.7 1846.3 636.5 1857.0 641.0C1867.9 645.6 1878.7 650.4 1889.4 655.5C1900.3 660.7 1911.2 665.9 1921.8 671.7C1932.8 677.7 1943.5 684.2 1954.0 691.0C1965.1 698.2 1975.9 705.8 1986.5 713.7C1997.6 722.0 2008.6 730.4 2018.9 739.6C2035.5 754.3 2049.6 771.7 2064.7 788.0C2075.6 799.8 2086.5 811.5 2097.0 823.6C2108.1 836.3 2118.6 849.5 2129.4 862.4C2137.5 872.1 2145.1 882.3 2153.7 891.5C2159.4 897.6 2165.6 903.4 2171.5 909.3L2171.5 909.3C2165.6 903.4 2160.0 897.0 2153.7 891.5C2146.1 884.9 2137.7 879.3 2129.4 873.7C2119.0 866.7 2108.2 860.0 2097.0 854.3C2086.6 849.0 2075.6 844.7 2064.7 840.6C2054.1 836.6 2043.4 832.3 2032.4 830.0C2021.8 827.8 2010.8 827.6 2000.0 826.8C1986.7 825.8 1973.3 825.4 1960.0 825.0C1947.3 824.6 1934.7 824.6 1922.0 824.4L1895.9 836.3C1880.4 844.0 1864.8 851.6 1849.4 859.5C1828.6 870.2 1807.2 880.2 1787.4 892.7C1765.6 906.4 1743.9 921.3 1725.4 939.0C1708.0 955.7 1692.6 975.0 1679.0 995.0C1665.8 1014.4 1654.3 1035.5 1644.8 1057.0C1635.9 1077.0 1628.7 1097.9 1623.0 1119.0C1617.5 1139.3 1613.7 1160.2 1610.7 1181.0C1607.3 1204.5 1606.6 1228.3 1604.5 1252.0L1604.5 1252.0L1603.0 1253.7L1603.0 1253.7C1604.0 1239.8 1604.8 1225.9 1606.0 1212.0C1607.7 1191.3 1609.9 1170.6 1612.3 1150.0C1615.4 1124.1 1618.6 1098.1 1623.0 1072.4C1627.4 1046.5 1633.0 1020.7 1638.6 995.0C1644.3 969.1 1650.3 943.2 1657.0 917.5C1663.3 893.2 1670.7 869.2 1677.4 845.0C1682.0 828.7 1685.8 812.1 1691.0 796.0C1695.4 782.4 1700.6 769.0 1705.6 755.6C1710.8 741.5 1716.1 727.4 1721.7 713.5C1726.9 700.5 1732.1 687.4 1737.9 674.7C1742.9 663.7 1749.1 653.3 1754.0 642.3C1756.9 635.9 1759.5 629.4 1762.2 622.9L1762.2 622.9L1790.5 618.6Z" fill="url(#gP5b)" /><path d="M1790.5 618.6C1801.9 621.7 1813.5 624.2 1824.7 628.0C1835.7 631.7 1846.3 636.5 1857.0 641.0C1867.9 645.6 1878.7 650.4 1889.4 655.5C1900.3 660.7 1911.2 665.9 1921.8 671.7C1932.8 677.7 1943.5 684.2 1954.0 691.0C1965.1 698.2 1975.9 705.8 1986.5 713.7C1997.6 722.0 2008.6 730.4 2018.9 739.6C2035.5 754.3 2049.6 771.7 2064.7 788.0C2075.6 799.8 2086.5 811.5 2097.0 823.6C2108.1 836.3 2118.6 849.5 2129.4 862.4C2137.5 872.1 2145.1 882.3 2153.7 891.5C2159.4 897.6 2165.6 903.4 2171.5 909.3L2171.5 909.3C2165.6 903.4 2160.0 897.0 2153.7 891.5C2146.1 884.9 2137.7 879.3 2129.4 873.7C2119.0 866.7 2108.2 860.0 2097.0 854.3C2086.6 849.0 2075.6 844.7 2064.7 840.6C2054.1 836.6 2043.4 832.3 2032.4 830.0C2021.8 827.8 2010.8 827.6 2000.0 826.8C1986.7 825.8 1973.3 825.4 1960.0 825.0C1947.3 824.6 1934.7 824.6 1922.0 824.4L1895.9 836.3C1880.4 844.0 1864.8 851.6 1849.4 859.5C1828.6 870.2 1807.2 880.2 1787.4 892.7C1765.6 906.4 1743.9 921.3 1725.4 939.0C1708.0 955.7 1692.6 975.0 1679.0 995.0C1665.8 1014.4 1654.3 1035.5 1644.8 1057.0C1635.9 1077.0 1628.7 1097.9 1623.0 1119.0C1617.5 1139.3 1613.7 1160.2 1610.7 1181.0C1607.3 1204.5 1606.6 1228.3 1604.5 1252.0L1604.5 1252.0L1603.0 1253.7L1603.0 1253.7C1604.0 1239.8 1604.8 1225.9 1606.0 1212.0C1607.7 1191.3 1609.9 1170.6 1612.3 1150.0C1615.4 1124.1 1618.6 1098.1 1623.0 1072.4C1627.4 1046.5 1633.0 1020.7 1638.6 995.0C1644.3 969.1 1650.3 943.2 1657.0 917.5C1663.3 893.2 1670.7 869.2 1677.4 845.0C1682.0 828.7 1685.8 812.1 1691.0 796.0C1695.4 782.4 1700.6 769.0 1705.6 755.6C1710.8 741.5 1716.1 727.4 1721.7 713.5C1726.9 700.5 1732.1 687.4 1737.9 674.7C1742.9 663.7 1749.1 653.3 1754.0 642.3C1756.9 635.9 1759.5 629.4 1762.2 622.9L1762.2 622.9L1790.5 618.6Z" fill="url(#gP5c)" /><path d="M1451.0 719.0C1500.7 701.7 1550.3 684.3 1600.0 667.0C1647.0 650.6 1694.0 634.3 1741.0 618.0L1741.0 618.0L1739.5 619.7L1721.7 650.4C1715.2 663.9 1708.3 677.2 1702.3 690.9C1696.5 704.2 1691.3 717.7 1686.2 731.3C1681.1 744.7 1676.2 758.1 1671.6 771.7C1667.0 785.1 1663.1 798.7 1658.7 812.2C1655.2 823.1 1651.3 834.0 1648.0 845.0C1640.7 868.9 1635.3 893.3 1629.3 917.5C1622.9 943.3 1615.9 969.0 1610.7 995.0C1605.6 1020.6 1601.7 1046.5 1598.3 1072.4C1595.0 1098.2 1592.1 1124.1 1590.6 1150.0C1589.4 1170.6 1588.8 1191.3 1589.0 1212.0C1589.2 1226.4 1590.1 1240.9 1590.6 1255.3L1590.6 1255.3L1590.6 1255.0L1589.0 1212.0C1588.0 1191.3 1587.6 1170.6 1586.0 1150.0C1583.9 1124.0 1580.8 1098.1 1576.7 1072.4C1572.5 1046.4 1567.6 1020.5 1561.0 995.0C1554.2 968.8 1546.2 942.7 1536.4 917.5C1531.5 904.8 1525.7 892.5 1520.4 880.0C1514.5 866.0 1508.8 852.0 1502.9 838.0C1497.2 824.5 1491.4 811.1 1485.4 797.7C1479.7 784.8 1474.2 771.7 1467.8 759.2C1461.4 746.6 1453.8 734.7 1446.8 722.4L1446.8 722.4L1451.0 719.0Z" fill="url(#gP6b)" /><path d="M1355.0 677.0C1358.0 675.6 1361.0 674.2 1364.0 672.9C1374.1 668.5 1384.7 665.0 1395.0 661.0C1405.7 656.9 1416.3 652.7 1427.0 648.6L1459.4 634.1C1470.2 629.8 1480.8 624.9 1491.7 621.1C1502.3 617.4 1513.1 614.1 1524.0 611.4C1534.7 608.8 1545.6 606.8 1556.4 605.0C1568.3 603.0 1580.3 601.1 1592.3 600.0C1605.7 598.8 1619.3 598.3 1632.8 598.4C1646.3 598.5 1659.8 599.3 1673.2 600.8C1684.0 602.0 1694.9 603.5 1705.6 605.7C1717.0 608.0 1728.2 611.6 1739.5 614.6L1739.5 614.6L1741.0 618.0L1741.0 618.0C1694.0 634.3 1647.0 650.6 1600.0 667.0C1550.3 684.3 1500.7 701.7 1451.0 719.0L1451.0 719.0C1449.6 720.1 1448.2 721.6 1446.8 722.4C1438.6 727.1 1432.4 706.1 1424.0 699.6C1416.0 693.4 1407.1 687.5 1397.7 683.8C1389.4 680.5 1380.3 678.7 1371.4 677.7C1366.0 677.1 1360.5 677.2 1355.0 677.0Z" fill="url(#gP6a)" /><path d="M1427.0 648.6C1437.8 641.1 1448.2 632.9 1459.4 626.0C1469.8 619.5 1480.5 613.2 1491.7 608.2C1502.1 603.6 1513.1 600.2 1524.0 596.9C1534.7 593.7 1545.5 590.8 1556.4 588.8C1568.2 586.6 1580.3 585.7 1592.3 584.7C1605.8 583.6 1619.3 582.9 1632.8 583.0C1646.3 583.1 1659.8 584.2 1673.2 585.5C1684.0 586.5 1694.8 587.9 1705.6 589.5C1718.0 591.3 1730.4 593.8 1742.8 596.0L1742.8 596.0L1739.5 614.6L1739.5 614.6C1728.2 611.6 1717.0 608.0 1705.6 605.7C1694.9 603.5 1684.0 602.0 1673.2 600.8C1659.8 599.3 1646.3 598.5 1632.8 598.4C1619.3 598.3 1605.7 598.8 1592.3 600.0C1580.3 601.1 1568.3 603.0 1556.4 605.0C1545.6 606.8 1534.7 608.8 1524.0 611.4C1513.1 614.1 1502.3 617.4 1491.7 621.1C1480.8 624.9 1470.1 629.6 1459.4 634.1C1448.5 638.7 1437.8 643.8 1427.0 648.6Z" fill="url(#gR1)" /><path d="M1790.5 600.8C1801.9 604.5 1813.5 607.6 1824.7 611.8C1835.6 615.9 1846.3 620.8 1857.0 625.5C1867.8 630.2 1878.7 635.0 1889.4 640.0C1900.3 645.1 1911.1 650.5 1921.8 656.0C1932.6 661.6 1943.5 667.3 1954.0 673.5C1965.1 680.0 1976.0 686.9 1986.5 694.3C1997.7 702.2 2008.3 710.8 2018.9 719.4C2028.9 727.5 2039.1 735.5 2048.5 744.3C2060.0 755.0 2070.5 766.6 2081.0 778.3C2092.2 790.8 2102.8 803.9 2113.3 817.0C2121.5 827.2 2130.1 837.1 2137.5 847.8C2143.3 856.2 2148.5 864.9 2153.7 873.7C2159.4 883.3 2163.9 893.5 2170.0 902.8C2172.5 906.7 2175.3 910.4 2178.0 914.2L2178.0 914.2L2171.5 909.3L2171.5 909.3C2165.6 903.4 2159.4 897.6 2153.7 891.5C2145.1 882.3 2137.5 872.1 2129.4 862.4C2118.6 849.5 2108.1 836.3 2097.0 823.6C2086.5 811.5 2075.6 799.8 2064.7 788.0C2049.6 771.7 2035.5 754.3 2018.9 739.6C2008.6 730.4 1997.6 722.0 1986.5 713.7C1975.9 705.8 1965.1 698.2 1954.0 691.0C1943.5 684.2 1932.8 677.7 1921.8 671.7C1911.2 665.9 1900.3 660.7 1889.4 655.5C1878.7 650.4 1867.9 645.6 1857.0 641.0C1846.3 636.5 1835.7 631.7 1824.7 628.0C1813.5 624.2 1801.9 621.7 1790.5 618.6L1790.5 618.6L1790.5 600.8Z" fill="#a87070" /><path d="M1739.5 619.7C1733.6 629.9 1727.3 640.0 1721.7 650.4C1714.7 663.6 1708.3 677.2 1702.3 690.9C1696.5 704.2 1691.3 717.7 1686.2 731.3C1681.1 744.7 1676.2 758.1 1671.6 771.7C1667.0 785.1 1663.1 798.7 1658.7 812.2C1655.2 823.1 1651.3 834.0 1648.0 845.0C1640.7 868.9 1635.3 893.3 1629.3 917.5C1622.9 943.3 1615.9 969.0 1610.7 995.0C1605.6 1020.6 1601.7 1046.5 1598.3 1072.4C1595.0 1098.2 1592.1 1124.1 1590.6 1150.0C1589.4 1170.6 1588.8 1191.3 1589.0 1212.0C1589.2 1226.4 1590.1 1240.9 1590.6 1255.3L1590.6 1255.3L1603.0 1253.7L1603.0 1253.7C1604.0 1239.8 1604.8 1225.9 1606.0 1212.0C1607.7 1191.3 1609.9 1170.6 1612.3 1150.0C1615.4 1124.1 1618.6 1098.1 1623.0 1072.4C1627.4 1046.5 1633.0 1020.7 1638.6 995.0C1644.3 969.1 1650.3 943.2 1657.0 917.5C1663.3 893.2 1670.7 869.2 1677.4 845.0C1682.0 828.7 1685.8 812.1 1691.0 796.0C1695.4 782.4 1700.6 769.0 1705.6 755.6C1710.8 741.5 1716.1 727.4 1721.7 713.5C1726.9 700.5 1732.1 687.4 1737.9 674.7C1742.9 663.7 1749.1 653.3 1754.0 642.3C1756.9 635.9 1759.5 629.4 1762.2 622.9L1762.2 622.9L1739.5 619.7Z" fill="url(#gR4)" /><path d="M1739.5 619.7C1733.6 629.9 1727.3 640.0 1721.7 650.4C1714.7 663.6 1708.3 677.2 1702.3 690.9C1696.5 704.2 1691.3 717.7 1686.2 731.3C1681.1 744.7 1676.2 758.1 1671.6 771.7C1667.0 785.1 1663.1 798.7 1658.7 812.2C1655.2 823.1 1651.3 834.0 1648.0 845.0C1640.7 868.9 1635.3 893.3 1629.3 917.5C1622.9 943.3 1615.9 969.0 1610.7 995.0C1605.6 1020.6 1601.7 1046.5 1598.3 1072.4C1595.0 1098.2 1592.1 1124.1 1590.6 1150.0C1589.4 1170.6 1588.8 1191.3 1589.0 1212.0C1589.2 1226.4 1590.1 1240.9 1590.6 1255.3L1590.6 1255.3L1592.5 1255.0L1592.5 1255.0C1592.2 1240.7 1591.5 1226.3 1591.5 1212.0C1591.6 1191.3 1592.4 1170.6 1594.0 1150.0C1596.1 1124.2 1599.7 1098.5 1604.0 1073.0C1608.3 1047.2 1614.3 1021.6 1620.0 996.0C1625.8 970.2 1632.1 944.6 1638.5 919.0C1644.4 895.3 1650.3 871.5 1657.0 848.0C1659.6 838.7 1662.3 829.5 1665.1 820.3C1669.1 807.2 1673.5 794.3 1678.0 781.4C1682.7 767.9 1687.5 754.4 1692.6 741.0C1697.8 727.4 1703.1 713.9 1708.8 700.6C1714.9 686.4 1721.3 672.3 1728.2 658.5C1734.5 645.8 1741.4 633.5 1748.0 621.0L1748.0 621.0L1739.5 619.7Z" fill="#573738" /><path d="M1742.8 596.0C1747.9 594.9 1755.4 590.8 1758.1 592.8C1760.9 594.9 1755.8 605.6 1759.0 609.0C1761.0 611.2 1765.3 612.5 1768.6 613.0C1771.7 613.5 1775.8 613.4 1778.3 612.2C1783.8 609.6 1780.0 589.7 1783.2 591.1C1784.9 591.9 1788.4 597.3 1789.7 600.8C1791.6 605.9 1791.9 614.2 1789.7 617.8C1786.3 623.4 1769.4 615.2 1763.8 620.2C1760.0 623.6 1760.9 635.1 1756.5 636.4C1753.4 637.3 1747.1 635.6 1744.4 633.2C1740.9 630.1 1742.2 622.4 1741.1 617.0Z" fill="#b0a280" /><path d="M1741.1 617.0C1748.7 618.1 1762.3 615.8 1763.8 620.2C1765.0 623.6 1760.9 635.1 1756.5 636.4C1753.4 637.3 1748.4 634.3 1744.4 633.2Z" fill="#7d7558" /><path d="M1812.3 530.5C1823.1 529.4 1844.8 523.6 1844.6 527.3C1844.4 529.9 1832.6 537.3 1826.9 542.6C1821.3 547.8 1816.0 553.3 1810.7 558.8C1805.2 564.6 1799.4 570.2 1794.5 576.6C1791.0 581.2 1787.4 586.0 1784.8 591.1C1781.7 597.2 1783.4 607.4 1778.3 610.6C1775.5 612.4 1770.6 613.5 1767.0 613.0C1763.9 612.6 1759.7 611.2 1758.1 609.0C1756.0 606.1 1758.0 600.2 1758.9 596.0C1760.1 590.9 1762.9 586.1 1765.4 581.4C1769.0 574.6 1773.5 568.1 1778.3 562.0C1783.2 555.7 1789.1 550.1 1794.5 544.2Z" fill="#4a2f33" /><path d="M1818.0 550.0C1815.6 552.9 1813.2 555.9 1810.7 558.8C1805.5 564.9 1799.4 570.2 1794.5 576.6C1791.0 581.2 1787.4 586.0 1784.8 591.1C1781.7 597.2 1783.6 607.6 1778.3 610.6C1775.9 612.0 1770.7 613.9 1769.0 612.5C1767.5 611.3 1767.8 606.7 1768.0 604.0C1768.4 598.3 1772.9 593.1 1776.0 588.0C1780.0 581.6 1784.9 575.6 1790.0 570.0C1794.9 564.6 1800.7 560.0 1806.0 555.0Z" fill="#704649" /><path d="M1355.0 677.0C1360.5 677.2 1366.0 677.1 1371.4 677.7C1380.3 678.7 1389.4 680.5 1397.7 683.8C1407.1 687.5 1416.0 693.4 1424.0 699.6C1432.4 706.1 1440.2 714.1 1446.8 722.4C1455.5 733.4 1461.4 746.6 1467.8 759.2C1474.2 771.7 1479.7 784.8 1485.4 797.7C1491.4 811.1 1497.2 824.5 1502.9 838.0C1508.8 852.0 1514.5 866.0 1520.4 880.0C1525.7 892.5 1531.5 904.8 1536.4 917.5C1546.2 942.7 1554.2 968.8 1561.0 995.0C1567.6 1020.5 1572.5 1046.4 1576.7 1072.4C1580.8 1098.1 1583.9 1124.0 1586.0 1150.0C1587.6 1170.6 1588.1 1191.3 1589.0 1212.0C1589.6 1226.3 1590.1 1240.7 1590.6 1255.0L1590.6 1255.0L1587.5 1261.0L1587.5 1261.0C1587.0 1244.7 1587.0 1228.3 1586.0 1212.0C1584.7 1191.3 1582.4 1170.6 1579.8 1150.0C1576.5 1124.0 1572.5 1098.1 1567.4 1072.4C1562.2 1046.4 1555.9 1020.5 1548.8 995.0C1541.5 968.9 1533.7 942.8 1524.0 917.5C1515.2 894.6 1504.5 872.5 1494.0 850.3C1485.6 832.6 1477.3 814.8 1467.8 797.7C1460.1 784.0 1451.5 770.8 1443.3 757.4L1408.0 764.4C1401.7 760.9 1395.5 757.2 1389.0 754.0C1382.2 750.7 1374.5 748.9 1368.0 745.0C1366.2 743.9 1364.5 742.6 1362.7 741.6C1357.0 738.6 1349.9 738.3 1343.4 738.0C1334.6 737.6 1325.4 738.9 1317.0 741.6C1311.6 743.3 1306.5 746.3 1301.3 748.7L1306.6 731.0C1311.9 720.5 1315.0 708.4 1322.4 699.6C1328.5 692.3 1336.6 685.7 1345.2 681.2C1348.3 679.6 1351.7 678.4 1355.0 677.0Z" fill="#4f3234" /><path d="M1301.3 748.7C1306.5 746.3 1311.6 743.3 1317.0 741.6C1325.4 738.9 1334.6 737.6 1343.4 738.0C1349.9 738.3 1357.0 738.6 1362.7 741.6C1364.5 742.6 1366.2 743.9 1368.0 745.0C1374.5 748.9 1382.2 750.7 1389.0 754.0C1395.5 757.2 1401.4 762.8 1408.0 764.4C1419.0 767.1 1431.5 759.7 1443.3 757.4L1443.3 757.4C1437.2 750.9 1432.1 742.8 1425.0 738.0C1415.3 731.5 1401.9 729.8 1390.0 728.0C1378.6 726.3 1366.5 725.9 1355.0 727.0C1344.9 727.9 1334.7 730.1 1325.0 733.0C1317.9 735.2 1311.0 738.3 1304.0 741.0Z" fill="#432a2c" /><path d="M1408.0 764.4C1415.1 778.4 1422.3 792.4 1429.3 806.5C1436.5 821.0 1443.5 835.6 1450.3 850.3C1458.8 868.4 1467.5 886.5 1475.0 905.0C1486.9 934.3 1496.1 964.7 1505.4 995.0C1513.2 1020.6 1520.8 1046.4 1527.0 1072.4C1533.1 1098.0 1538.5 1124.0 1542.6 1150.0C1545.8 1170.6 1548.8 1191.3 1550.3 1212.0C1551.7 1231.0 1551.4 1250.1 1551.9 1269.2L1551.9 1269.2L1587.5 1261.5L1587.5 1261.0C1587.0 1244.7 1587.0 1228.3 1586.0 1212.0C1584.7 1191.3 1582.4 1170.6 1579.8 1150.0C1576.5 1124.0 1572.5 1098.1 1567.4 1072.4C1562.2 1046.4 1555.9 1020.5 1548.8 995.0C1541.5 968.9 1533.7 942.8 1524.0 917.5C1515.2 894.6 1504.5 872.5 1494.0 850.3C1485.6 832.6 1477.3 814.8 1467.8 797.7C1460.1 784.0 1451.5 770.8 1443.3 757.4L1443.3 757.4L1408.0 764.4Z" fill="url(#gA1l)" /><path d="M2240.7 1118.3C2239.6 1110.2 2238.5 1102.1 2237.4 1094.0C2236.3 1085.9 2235.5 1077.8 2234.2 1069.8C2232.8 1061.7 2230.4 1053.7 2229.3 1045.5C2228.4 1039.0 2228.2 1032.5 2227.7 1026.0L2225.3 1021.3C2223.4 1013.2 2221.9 1005.0 2219.6 997.0C2217.3 988.8 2214.7 980.7 2211.6 972.8C2208.3 964.5 2204.6 956.3 2200.2 948.5C2196.0 941.0 2190.7 934.2 2186.0 927.0C2182.2 921.1 2179.2 914.6 2174.8 909.3C2169.0 902.3 2160.9 897.2 2153.7 891.5C2145.8 885.3 2137.7 879.3 2129.4 873.7C2119.0 866.7 2108.2 860.0 2097.0 854.3C2086.6 849.0 2075.6 844.7 2064.7 840.6C2054.1 836.6 2043.4 832.3 2032.4 830.0C2021.8 827.8 2010.8 827.6 2000.0 826.8C1986.7 825.8 1973.3 825.4 1960.0 825.0C1947.3 824.6 1934.7 824.6 1922.0 824.4L1895.9 836.3C1880.4 844.0 1864.8 851.6 1849.4 859.5C1828.6 870.2 1807.2 880.2 1787.4 892.7C1765.6 906.4 1743.9 921.3 1725.4 939.0C1708.0 955.7 1692.6 975.0 1679.0 995.0C1665.8 1014.4 1654.3 1035.5 1644.8 1057.0C1635.9 1077.0 1628.7 1097.9 1623.0 1119.0C1617.5 1139.3 1613.7 1160.2 1610.7 1181.0C1607.3 1204.5 1606.6 1228.3 1604.5 1252.0L1604.5 1252.0L1609.0 1262.0L1609.0 1262.0C1610.6 1245.3 1611.1 1228.5 1613.8 1212.0C1617.2 1191.0 1622.6 1170.2 1629.3 1150.0C1636.7 1127.6 1645.9 1105.4 1657.2 1084.8C1668.6 1064.1 1682.7 1044.5 1697.5 1026.0C1712.6 1007.3 1729.2 989.5 1747.0 973.3C1764.4 957.5 1783.5 943.2 1802.9 929.9C1822.7 916.3 1843.4 903.5 1864.9 892.7C1885.8 882.2 1908.3 874.9 1930.0 866.0L1989.5 867.4C1993.0 867.6 1996.5 867.7 2000.0 868.0C2010.9 868.9 2021.7 871.2 2032.4 873.7C2043.3 876.3 2054.1 879.7 2064.7 883.4C2075.6 887.2 2086.6 891.3 2097.0 896.4C2108.3 901.9 2119.1 908.6 2129.4 915.8C2137.9 921.8 2146.3 928.0 2153.7 935.2C2157.5 938.9 2161.1 943.0 2164.7 946.9C2170.1 952.8 2175.7 958.6 2180.8 964.7C2186.5 971.5 2191.0 979.2 2197.0 985.7C2201.7 990.8 2207.7 994.7 2212.0 1000.0C2214.8 1003.4 2217.6 1007.1 2219.6 1011.0C2222.6 1016.8 2223.5 1023.6 2225.0 1030.0C2226.4 1035.6 2227.4 1041.3 2228.5 1047.0C2230.0 1054.7 2231.6 1062.3 2233.0 1070.0C2234.4 1078.0 2235.7 1086.0 2237.0 1094.0C2238.3 1102.1 2239.5 1110.2 2240.7 1118.3Z" fill="#956060" /><path d="M1930.0 866.0C1908.3 874.9 1885.8 882.2 1864.9 892.7C1843.4 903.5 1822.7 916.3 1802.9 929.9C1783.5 943.2 1764.4 957.5 1747.0 973.3C1729.2 989.5 1712.6 1007.3 1697.5 1026.0C1682.7 1044.5 1668.6 1064.1 1657.2 1084.8C1645.9 1105.4 1636.7 1127.6 1629.3 1150.0C1622.6 1170.2 1617.2 1191.0 1613.8 1212.0C1611.1 1228.5 1610.6 1245.3 1609.0 1262.0L1609.0 1262.0L1618.5 1281.6L1618.5 1281.6C1621.0 1258.4 1621.3 1234.7 1626.0 1212.0C1630.4 1190.9 1637.3 1170.2 1644.8 1150.0C1652.7 1128.8 1661.2 1107.4 1672.7 1088.0C1683.3 1070.2 1696.7 1053.9 1710.0 1038.0C1724.4 1020.7 1739.7 1003.9 1756.4 988.8C1775.5 971.5 1796.7 956.2 1818.4 942.3C1838.2 929.6 1859.1 918.1 1880.4 908.2C1900.7 898.8 1922.1 891.9 1943.0 883.7L1943.0 883.7L1930.0 866.0Z" fill="url(#gA2f)" /><path d="M1930.0 866.0C1949.8 866.5 1969.8 865.5 1989.5 867.4C2003.9 868.8 2018.4 870.4 2032.4 873.7C2043.3 876.2 2054.1 879.7 2064.7 883.4C2075.6 887.2 2086.6 891.3 2097.0 896.4C2108.3 901.9 2119.1 908.6 2129.4 915.8C2137.9 921.8 2146.3 928.0 2153.7 935.2C2157.5 938.9 2161.0 943.0 2164.7 946.9L2164.7 946.9C2159.8 944.9 2154.8 943.3 2150.0 941.0C2142.8 937.6 2136.3 932.7 2129.4 928.7C2118.7 922.6 2108.1 916.2 2097.0 911.0C2086.5 906.1 2075.6 901.8 2064.7 898.0C2054.1 894.3 2043.3 890.7 2032.4 888.3C2021.8 885.9 2010.8 884.4 2000.0 883.4C1981.1 881.6 1962.0 883.6 1943.0 883.7L1943.0 883.7L1930.0 866.0Z" fill="url(#gA2u)" /><path d="M2164.7 946.9C2169.0 950.7 2173.7 954.1 2177.6 958.2C2186.1 967.3 2191.5 979.3 2197.0 990.5C2202.1 1000.9 2206.1 1011.9 2210.0 1022.9C2213.6 1033.0 2217.0 1043.2 2219.6 1053.6C2221.6 1061.6 2223.4 1069.7 2224.5 1077.9C2225.5 1085.9 2225.5 1094.0 2226.0 1102.0L2226.0 1102.0L2201.0 1096.4L2201.0 1096.4C2199.7 1087.5 2198.4 1078.7 2197.0 1069.8C2195.5 1060.6 2194.1 1051.4 2192.2 1042.3C2189.9 1031.4 2186.9 1020.7 2184.0 1010.0C2181.0 999.1 2177.9 988.3 2174.4 977.6C2171.4 968.3 2167.9 959.2 2164.7 950.0Z" fill="#a06868" /><path d="M2180.8 964.7C2186.2 971.7 2191.0 979.2 2197.0 985.7C2201.7 990.8 2207.7 994.7 2212.0 1000.0C2214.8 1003.4 2217.6 1007.1 2219.6 1011.0C2222.6 1016.8 2223.5 1023.6 2225.0 1030.0C2226.4 1035.6 2227.4 1041.3 2228.5 1047.0C2230.0 1054.7 2231.6 1062.3 2233.0 1070.0C2234.4 1078.0 2235.7 1086.0 2237.0 1094.0C2238.3 1102.1 2239.5 1110.2 2240.7 1118.3L2240.7 1118.3L2226.0 1102.0L2226.0 1102.0C2225.5 1094.0 2225.5 1085.9 2224.5 1077.9C2223.4 1069.7 2221.6 1061.6 2219.6 1053.6C2217.0 1043.2 2213.6 1033.0 2210.0 1022.9C2206.1 1011.9 2202.3 1000.8 2197.0 990.5C2192.4 981.5 2186.2 973.3 2180.8 964.7Z" fill="#3a2426" /></svg>
<div class="b" style="left:2715px;top:214.5px;width:808px;height:40.5px;background:#d9d9d9;"></div>
<span class="t" style="left:2723.1px;top:225.9px;font-size:22px;color:#000;transform:scaleX(1.050);">FCInfo (01.21-rμ)</span>
<svg class="b" style="left:3478px;top:227px;" width="40" height="16" viewBox="0 0 40 16"><path d="M3 6h7v6h-7z M5.500 6v-2.500h7v6h-2.500" fill="#666" stroke="#555" stroke-width="1.500"/><path d="M28 5l7 6M35 5l-7 6" stroke="#555" stroke-width="2"/></svg>
<div class="b" style="left:2733.5px;top:274.5px;width:770.5px;height:1208.5px;background:#f0f0f0;border:3px solid #bfc3c8;box-sizing:border-box;"></div>
<div class="b" style="left:3468px;top:277.5px;width:33px;height:1169px;background:#f0f0f0;"></div>
<div class="b" style="left:3469px;top:558.5px;width:31px;height:396.5px;background:#cdcdcd;"></div>
<svg class="b" style="left:3475px;top:290px;" width="22" height="14" viewBox="0 0 22 14"><path d="M3 11l8-8 8 8" fill="none" stroke="#555" stroke-width="2.8"/></svg>
<svg class="b" style="left:3475px;top:1420px;" width="22" height="14" viewBox="0 0 22 14"><path d="M3 3l8 8 8-8" fill="none" stroke="#555" stroke-width="2.8"/></svg>
<div class="b" style="left:2736.5px;top:1446.5px;width:731.5px;height:33.5px;background:#f0f0f0;"></div>
<div class="b" style="left:2772px;top:1447.5px;width:654px;height:32px;background:#cdcdcd;"></div>
<svg class="b" style="left:2746px;top:1452px;" width="14" height="22" viewBox="0 0 14 22"><path d="M11 2l-8 9 8 9" fill="none" stroke="#555" stroke-width="2.8"/></svg>
<svg class="b" style="left:3440px;top:1452px;" width="14" height="22" viewBox="0 0 14 22"><path d="M3 2l8 9-8 9" fill="none" stroke="#555" stroke-width="2.8"/></svg>
<div class="b" style="left:2754.5px;top:277.5px;width:695.5px;height:79px;border:2px solid #e2e2e2;box-sizing:border-box;border-top:none;"></div>
<div class="b" style="left:2772.5px;top:277.5px;width:659.5px;height:61.5px;background:#f0f0f0;border:2.5px solid #bfc3c8;box-sizing:border-box;border-top:none;"></div>
<div class="b" style="left:2775px;top:277.5px;width:59px;height:25.5px;background:#fff;"></div>
<div class="b" style="left:2834px;top:277.5px;width:560px;height:25.5px;background:#f7f7f7;"></div>
<div class="b" style="left:2834px;top:286px;width:560px;height:2px;background:#e6e6e6;"></div>
<div class="b" style="left:2955px;top:277.5px;width:2.5px;height:25.5px;background:#e6e6e6;"></div>
<div class="b" style="left:3077px;top:277.5px;width:2.5px;height:25.5px;background:#e6e6e6;"></div>
<div class="b" style="left:3199px;top:277.5px;width:2.5px;height:25.5px;background:#e6e6e6;"></div>
<div class="b" style="left:3320.5px;top:277.5px;width:2.5px;height:25.5px;background:#e6e6e6;"></div>
<div class="b" style="left:2784px;top:277.5px;width:12px;height:3px;background:#ff2020;"></div>
<div class="b" style="left:2785px;top:297px;width:8px;height:5px;background:#ff5070;"></div>
<svg class="b" style="left:3404px;top:278px;" width="18" height="12" viewBox="0 0 18 12"><path d="M2 2l7 7 7-7" fill="none" stroke="#c4c4c4" stroke-width="2.4"/></svg>
<svg class="b" style="left:2786px;top:309px;" width="14" height="22" viewBox="0 0 14 22"><path d="M11 2l-8 9 8 9" fill="none" stroke="#c8c8c8" stroke-width="2.8"/></svg>
<svg class="b" style="left:3368px;top:309px;" width="14" height="22" viewBox="0 0 14 22"><path d="M3 2l8 9-8 9" fill="none" stroke="#c8c8c8" stroke-width="2.8"/></svg>
<div class="b" style="left:2755px;top:383.5px;width:695px;height:346px;border:2px solid #e2e2e2;box-sizing:border-box;"></div>
<div class="b" style="left:2764px;top:379.5px;width:115.4px;height:12px;background:#f0f0f0;"></div>
<span class="t" style="left:2767.8px;top:374.5px;font-size:22px;color:#000;transform:scaleX(1.073);">Inclination</span>
<div class="b" style="left:2775.5px;top:418.5px;width:160.5px;height:44.2px;background:#e1e1e1;border:2px solid #adadad;box-sizing:border-box;"></div>
<span class="t" style="left:2817.3px;top:431.4px;font-size:22px;color:#000;transform:scaleX(1.052);">Degree</span>
<span class="t" style="left:2947.9px;top:431.4px;font-size:22px;color:#000;transform:scaleX(1.018);">Coordinates</span>
<span class="t" style="left:2773.8px;top:483.0px;font-size:22.5px;color:#ff0000;font-weight:bold;transform:scaleX(0.994);">XY</span>
<div class="b" style="left:2949px;top:476px;width:227.5px;height:34.4px;background:#fff;border:2px solid #b4b4b4;box-sizing:border-box;overflow:hidden;"></div>
<span class="t" style="left:2954.3px;top:484.0px;font-size:21.5px;color:#000;transform:scaleX(1.048);">0.0°</span>
<div class="b" style="left:3189px;top:476px;width:230.5px;height:34.4px;background:#fff;border:2px solid #b4b4b4;box-sizing:border-box;overflow:hidden;"><span class="t" style="right:4px;top:6.0px;font-size:21.5px;color:#000;transform-origin:100% 0;transform:scaleX(1.17);">[,0.0 , 0.0 , 0.0,]  [,0.0 , 0.0,]</span></div>
<span class="t" style="left:2773.8px;top:530.0px;font-size:22.5px;color:#1a9a1a;font-weight:bold;transform:scaleX(1.040);">YZ</span>
<div class="b" style="left:2949px;top:523px;width:227.5px;height:34.5px;background:#fff;border:2px solid #b4b4b4;box-sizing:border-box;overflow:hidden;"></div>
<span class="t" style="left:2954.3px;top:531.1px;font-size:21.5px;color:#000;transform:scaleX(1.048);">0.0°</span>
<div class="b" style="left:3189px;top:523px;width:230.5px;height:34.5px;background:#fff;border:2px solid #b4b4b4;box-sizing:border-box;overflow:hidden;"><span class="t" style="right:4px;top:6.1px;font-size:21.5px;color:#000;transform-origin:100% 0;transform:scaleX(1.17);">[,0.0 , 0.0 , 0.0,]  [,0.0 , 0.0,]</span></div>
<span class="t" style="left:2773.8px;top:577.0px;font-size:22.5px;color:#0000ff;font-weight:bold;transform:scaleX(1.040);">ZX</span>
<div class="b" style="left:2949px;top:570.3px;width:227.5px;height:34.4px;background:#fff;border:2px solid #b4b4b4;box-sizing:border-box;overflow:hidden;"></div>
<span class="t" style="left:2954.3px;top:578.3px;font-size:21.5px;color:#000;transform:scaleX(1.048);">0.0°</span>
<div class="b" style="left:3189px;top:570.3px;width:230.5px;height:34.4px;background:#fff;border:2px solid #b4b4b4;box-sizing:border-box;overflow:hidden;"><span class="t" style="right:4px;top:6.0px;font-size:21.5px;color:#000;transform-origin:100% 0;transform:scaleX(1.17);">[,0.0 , 0.0 , 0.0,]  [,0.0 , 0.0,]</span></div>
<span class="t" style="left:2773.8px;top:629.4px;font-size:22px;color:#000;transform:scaleX(1.041);">Direction Object</span>
<div class="b" style="left:2949px;top:617.5px;width:227.5px;height:45.7px;background:#e1e1e1;border:2px solid #d0d0d0;box-sizing:border-box;"></div>
<span class="t" style="left:3039.8px;top:629.4px;font-size:22px;color:#000;transform:scaleX(1.080);">Line</span>
<div class="b" style="left:3189px;top:623px;width:230.5px;height:33.6px;background:#fff;border:2px solid #b4b4b4;box-sizing:border-box;overflow:hidden;"><span class="t" style="right:4px;top:5.2px;font-size:21.5px;color:#000;transform-origin:100% 0;transform:scaleX(1.0);">4.7012512039102148265)</span></div>
<span class="t" style="left:2773.8px;top:683.8px;font-size:22px;color:#000;transform:scaleX(1.019);">ValueAt</span>
<div class="b" style="left:2949px;top:677.8px;width:470.5px;height:33px;background:#fff;border:2px solid #b4b4b4;box-sizing:border-box;overflow:hidden;"></div>
<span class="t" style="left:2954.3px;top:684.4px;font-size:21.5px;color:#000;transform:scaleX(1.014);">0.0</span>
<div class="b" style="left:2755px;top:756.6px;width:695px;height:317.4px;border:2px solid #e2e2e2;box-sizing:border-box;"></div>
<div class="b" style="left:2764px;top:752.6px;width:215.6px;height:12px;background:#f0f0f0;"></div>
<span class="t" style="left:2767.8px;top:747.6px;font-size:22px;color:#000;transform:scaleX(1.042);">Surface and Volume</span>
<span class="t" style="left:2773.8px;top:795.4px;font-size:22px;color:#000;transform:scaleX(1.066);">Surface of the form</span>
<div class="b" style="left:2985.4px;top:788.7px;width:446.1px;height:34.9px;background:#fff;border:2px solid #b4b4b4;box-sizing:border-box;overflow:hidden;"></div>
<span class="t" style="left:2990.7px;top:797.2px;font-size:21.5px;color:#000;transform:scaleX(1.035);">9025447.884992724 mm²</span>
<span class="t" style="left:2773.8px;top:841.6px;font-size:22px;color:#000;transform:scaleX(1.055);">Surface of the face</span>
<div class="b" style="left:2985.4px;top:836.8px;width:446.1px;height:33px;background:#fff;border:2px solid #b4b4b4;box-sizing:border-box;overflow:hidden;"></div>
<span class="t" style="left:2990.7px;top:843.4px;font-size:21.5px;color:#000;transform:scaleX(1.084);">0.0 mm²</span>
<span class="t" style="left:2773.8px;top:889.3px;font-size:22px;color:#000;transform:scaleX(1.066);">Volume of the form</span>
<div class="b" style="left:2985.4px;top:882px;width:446.1px;height:35.5px;background:#fff;border:2px solid #b4b4b4;box-sizing:border-box;overflow:hidden;"></div>
<span class="t" style="left:2990.7px;top:891.1px;font-size:21.5px;color:#000;transform:scaleX(1.038);">1848.2135088145733 mm³</span>
<span class="t" style="left:2773.8px;top:937.4px;font-size:22px;color:#000;transform:scaleX(1.018);">Unit</span>
<div class="b" style="left:2985.4px;top:930px;width:446.1px;height:33px;background:#e1e1e1;border:2px solid #c8c8c8;box-sizing:border-box;"></div>
<span class="t" style="left:2990.3px;top:936.8px;font-size:21.5px;color:#000;transform:scaleX(1.067);">decigram</span>
<svg class="b" style="left:3412px;top:943px;" width="14" height="10" viewBox="0 0 14 10"><path d="M2 2h10l-5 6z" fill="#333"/></svg>
<span class="t" style="left:2773.8px;top:983.1px;font-size:22px;color:#000;transform:scaleX(1.071);">Weight</span>
<div class="b" style="left:2985.4px;top:976px;width:446.1px;height:35.3px;background:#fff;border:2px solid #b4b4b4;box-sizing:border-box;overflow:hidden;"></div>
<span class="t" style="left:2990.7px;top:984.9px;font-size:21.5px;color:#000;transform:scaleX(1.030);">17.37320698285699 dg</span>
<span class="t" style="left:2773.8px;top:1029.4px;font-size:22px;color:#000;transform:scaleX(1.006);">Density</span>
<div class="b" style="left:2985.4px;top:1022px;width:446.1px;height:34.6px;background:#fff;border:2px solid #b4b4b4;box-sizing:border-box;overflow:hidden;"></div>
<span class="t" style="left:2990.8px;top:1030.2px;font-size:21.5px;color:#000;">0,940</span>
<div class="b" style="left:3406px;top:1024px;width:23.5px;height:30.6px;background:#f0f0f0;"></div>
<svg class="b" style="left:3410px;top:1026px;" width="16" height="28" viewBox="0 0 16 28"><path d="M3 11l5-6 5 6zM3 17l5 6 5-6z" fill="#333"/></svg>
<div class="b" style="left:2755px;top:1102.4px;width:695px;height:125px;border:2px solid #e2e2e2;box-sizing:border-box;"></div>
<div class="b" style="left:2764px;top:1098.4px;width:112px;height:12px;background:#f0f0f0;"></div>
<span class="t" style="left:2767.8px;top:1093.4px;font-size:22px;color:#000;transform:scaleX(1.013);">BoundBox</span>
<span class="t" style="left:2773.8px;top:1138.0px;font-size:22px;color:#000;transform:scaleX(1.017);">XLength</span>
<span class="t" style="left:2939.9px;top:1138.0px;font-size:22px;color:#000;transform:scaleX(1.034);">YLength</span>
<span class="t" style="left:3104.0px;top:1138.0px;font-size:22px;color:#000;transform:scaleX(1.055);">ZLength</span>
<span class="t" style="left:3271.3px;top:1138.0px;font-size:22px;color:#000;transform:scaleX(1.034);">DiagonalLength</span>
<div class="b" style="left:2772px;top:1175.5px;width:155.4px;height:34.5px;background:#fff;border:2px solid #b4b4b4;box-sizing:border-box;overflow:hidden;"><span class="t" style="right:4px;top:6.1px;font-size:21.5px;color:#000;transform-origin:100% 0;transform:scaleX(1.03);">2769079333 mm</span></div>
<div class="b" style="left:2940.6px;top:1175.5px;width:151.9px;height:34.5px;background:#fff;border:2px solid #b4b4b4;box-sizing:border-box;overflow:hidden;"><span class="t" style="right:4px;top:6.1px;font-size:21.5px;color:#000;transform-origin:100% 0;transform:scaleX(1.03);">1765796012 mm</span></div>
<div class="b" style="left:3104.7px;top:1175.5px;width:155.7px;height:34.5px;background:#fff;border:2px solid #b4b4b4;box-sizing:border-box;overflow:hidden;"><span class="t" style="right:4px;top:6.1px;font-size:21.5px;color:#000;transform-origin:100% 0;transform:scaleX(1.03);">8379839026 mm</span></div>
<div class="b" style="left:3270.8px;top:1175.5px;width:160.2px;height:34.5px;background:#fff;border:2px solid #b4b4b4;box-sizing:border-box;overflow:hidden;"><span class="t" style="right:4px;top:6.1px;font-size:21.5px;color:#000;transform-origin:100% 0;transform:scaleX(1.03);">5811225421 mm</span></div>
<div class="b" style="left:2755px;top:1254px;width:695px;height:192.5px;border:2px solid #e2e2e2;box-sizing:border-box;border-bottom:none;"></div>
<div class="b" style="left:2764px;top:1250px;width:120px;height:12px;background:#f0f0f0;"></div>
<span class="t" style="left:2767.8px;top:1244.1px;font-size:22px;color:#000;transform:scaleX(1.060);">Center of :</span>
<span class="t" style="left:2773.8px;top:1289.9px;font-size:22px;color:#000;transform:scaleX(1.020);">Forme</span>
<span class="t" style="left:2773.8px;top:1328.6px;font-size:22.5px;color:#ff0000;font-weight:bold;transform:scaleX(1.062);">X</span>
<span class="t" style="left:2975.3px;top:1328.6px;font-size:22.5px;color:#1a9a1a;font-weight:bold;transform:scaleX(1.098);">Y</span>
<span class="t" style="left:3174.7px;top:1328.6px;font-size:22.5px;color:#0000ff;font-weight:bold;transform:scaleX(1.130);">Z</span>
<div class="b" style="left:2772px;top:1371px;width:191px;height:34px;background:#fff;border:2px solid #b4b4b4;box-sizing:border-box;overflow:hidden;"><span class="t" style="right:4px;top:5.6px;font-size:21.5px;color:#000;transform-origin:100% 0;transform:scaleX(1.03);">1493278064844 mm</span></div>
<div class="b" style="left:2974.5px;top:1371px;width:190.1px;height:34px;background:#fff;border:2px solid #b4b4b4;box-sizing:border-box;overflow:hidden;"><span class="t" style="right:4px;top:5.6px;font-size:21.5px;color:#000;transform-origin:100% 0;transform:scaleX(1.03);">22.1720071501 mm</span></div>
<div class="b" style="left:3175px;top:1371px;width:190px;height:34px;background:#fff;border:2px solid #b4b4b4;box-sizing:border-box;overflow:hidden;"><span class="t" style="right:4px;top:5.6px;font-size:21.5px;color:#000;transform-origin:100% 0;transform:scaleX(1.03);">1.08221989003 mm</span></div>
<div class="b" style="left:3378px;top:1365.6px;width:52px;height:44.4px;background:#e1e1e1;border:2px solid #c4c4c4;box-sizing:border-box;"></div>
<svg class="b" style="left:3384px;top:1370px;" width="40" height="36" viewBox="0 0 40 36"><rect x="5" y="12" width="26" height="20" fill="#e6d86a"/><path d="M6 28h26" stroke="#e02020" stroke-width="3"/><path d="M24 30v-24" stroke="#20b020" stroke-width="3"/><path d="M14 8l10 16" stroke="#2050d0" stroke-width="4"/><rect x="24" y="22" width="8" height="10" fill="#9a9a9a"/></svg>
<div class="b" style="left:2760px;top:1420px;width:300px;height:26.5px;overflow:hidden;"><span class="t" style="left:14.5px;top:5.2px;font-size:22px;color:#000;transform:scaleX(0.95)">Masse</span></div>
</body></html>
